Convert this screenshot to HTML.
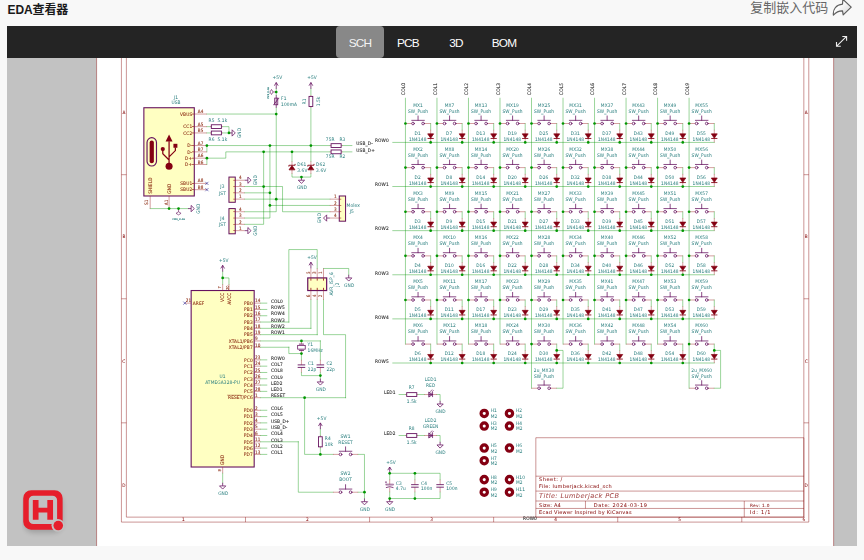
<!DOCTYPE html>
<html lang="zh-CN"><head><meta charset="utf-8"><title>EDA查看器</title>
<style>
html,body{margin:0;padding:0}
body{width:864px;height:560px;overflow:hidden;background:#f8f8f8;position:relative;font-family:"Liberation Sans","Noto Sans CJK SC",sans-serif}
.hd{position:absolute;left:7.5px;top:2.1px;font-size:12px;font-weight:bold;color:#1a1a1a;line-height:17px;letter-spacing:-.1px}
.cp{position:absolute;right:35.8px;top:-1px;font-size:13px;color:#666;line-height:18px;white-space:nowrap}
.share{position:absolute;left:832px;top:-1px}
.view{position:absolute;left:7px;top:26px;width:850px;height:520px;background:#c2c2c2;overflow:hidden}
.bar{position:absolute;left:0;top:0;width:850px;height:32px;background:#242424}
.tab{position:absolute;top:0;height:32px;width:48px;color:#fff;font-size:11.8px;line-height:35px;text-align:center;letter-spacing:-.75px}
.tab.on{background:#888;border-radius:4px;color:#f4f4f4}
.fs{position:absolute;left:828px;top:9px}
.logo{position:absolute;left:15px;top:463px}
</style></head><body>
<div class="hd">EDA查看器</div>
<div class="cp">复制嵌入代码</div>
<svg class="share" width="22" height="18" viewBox="0 0 22 18"><defs><linearGradient id="sg" x1="0" y1="0" x2="1" y2="1"><stop offset=".35" stop-color="#fff"/><stop offset="1" stop-color="#d4d4d4"/></linearGradient></defs><path d="M10.900 0.300L19.200 8.200L11.200 15.800L10.500 11.900C7.400 11.800 4.400 12.900 1.400 16.100C0.700 10.600 4 5.700 10.500 5.100Z" fill="url(#sg)" stroke="#5c5c5c" stroke-width="1.15" stroke-linejoin="round"/></svg>
<div class="view">
<svg width="850" height="520" viewBox="7 26 850 520" font-family="'DejaVu Sans Condensed','DejaVu Sans',sans-serif" text-rendering="geometricPrecision" style="position:absolute;left:0;top:0">
<defs><g id="sw" fill="none">
<path d="M-5.08 0H-2.54M5.08 0H2.54" stroke="#a02828" stroke-width="0.18"/>
<g stroke="#66125f" stroke-width="0.31" stroke-linecap="round"><circle cx="-2.032" cy="0" r=".54"/><circle cx="2.032" cy="0" r=".54"/>
<path d="M-2.54 1.27H2.54M0 1.27V3.048"/></g></g><g id="d">
<path d="M-2.54 0H-.762M2.54 0H.762" stroke="#a02828" stroke-width="0.18" fill="none"/>
<path d="M-.9 -1.2V1.2L.85 0Z" fill="#840012" stroke="#840012" stroke-width="0.28" stroke-linejoin="miter"/>
<path d="M.95 -1.25V1.25" stroke="#840012" stroke-width="0.35" fill="none"/></g><g id="dz">
<path d="M-2.54 0H-.762M2.54 0H.762" stroke="#a02828" stroke-width="0.18" fill="none"/>
<path d="M-.9 -1.2V1.2L.85 0Z" fill="#840012" stroke="#840012" stroke-width="0.28"/>
<path d="M.4 1.25L.95 1.25V-1.25L1.5 -1.25" stroke="#840012" stroke-width="0.35" fill="none"/></g><g id="led" fill="none">
<path d="M-2.54 0H-.762M2.54 0H.762" stroke="#a02828" stroke-width="0.18"/>
<g stroke="#66125f" stroke-width="0.31"><path d="M-.762 -1.016V1.016L.762 0ZM.762 -1.016V1.016M-.762 0H.762" fill="#66125f" fill-opacity=".45"/>
<path d="M-.2 1.1L.6 2M.4 .9L1.2 1.8" stroke-width="0.25"/></g></g><g id="r" fill="none">
<path d="M0 -2.54V-2.032M0 2.54V2.032" stroke="#a02828" stroke-width="0.18"/>
<rect x="-.762" y="-2.032" width="1.524" height="4.064" stroke="#66125f" stroke-width="0.36"/></g><g id="c" fill="none">
<path d="M0 -2.54V-.508M0 2.54V.508" stroke="#a02828" stroke-width="0.18"/>
<path d="M-1.524 .508H1.524M-1.524 -.508H1.524" stroke="#66125f" stroke-width="0.36"/></g><g id="cp" fill="none">
<path d="M0 -2.54V-.6M0 2.54V.6" stroke="#a02828" stroke-width="0.18"/>
<rect x="-1.524" y=".35" width="3.048" height=".4" stroke="#66125f" stroke-width="0.2"/>
<path d="M-1.524 -.7Q0 .1 1.524 -.7" stroke="#66125f" stroke-width="0.32"/>
<path d="M-1.9 1.5H-1.1M-1.5 1.9V1.1" stroke="#66125f" stroke-width="0.2"/></g><g id="pf" fill="none">
<path d="M0 -2.54V2.54" stroke="#66125f" stroke-width="0.31"/>
<rect x="-.62" y="-1.35" width="1.24" height="2.7" stroke="#66125f" stroke-width="0.31"/>
<path d="M-1.2 -1.35H-1L1 1.35H1.2" stroke="#66125f" stroke-width="0.31"/></g><g id="xt" fill="none">
<path d="M0 -2.54V-1.27M0 2.54V1.27" stroke="#a02828" stroke-width="0.18"/>
<rect x="-1.524" y="-.762" width="3.048" height="1.524" stroke="#66125f" stroke-width="0.31"/>
<path d="M-1.016 1.27H1.016M-1.016 -1.27H1.016" stroke="#66125f" stroke-width="0.34"/></g><g id="gnd" fill="none" stroke="#66125f" stroke-width="0.31">
<path d="M0 0V-1.27H1.27L0 -2.54L-1.27 -1.27H0"/></g><g id="p5" fill="none" stroke="#66125f" stroke-width="0.31">
<path d="M0 0V2.54M-.762 1.27L0 2.54L.762 1.27"/></g><g id="pwf" fill="none" stroke="#66125f" stroke-width="0.25">
<path d="M0 0V1.27L-1.016 1.905L0 2.54L1.016 1.905L0 1.27"/></g><g id="mh"><circle cx="0" cy="0" r="1.27" fill="none" stroke="#840012" stroke-width="1.3"/></g><g id="nc"><path d="M-.635 -.635L.635 .635M-.635 .635L.635 -.635" stroke="#000084" stroke-width="0.2" fill="none"/></g><g id="j4"><rect x="-1.27" y="-6.35" width="2.54" height="10.16" fill="#ffffc2" stroke="#66125f" stroke-width="0.41"/><path d="M-5.08 2.54H-1.27" stroke="#a02828" stroke-width="0.18" fill="none"/><rect x="-1.27" y="2.41" width=".8" height=".254" fill="#a02828"/><path d="M-5.08 0H-1.27" stroke="#a02828" stroke-width="0.18" fill="none"/><rect x="-1.27" y="-0.13" width=".8" height=".254" fill="#a02828"/><path d="M-5.08 -2.54H-1.27" stroke="#a02828" stroke-width="0.18" fill="none"/><rect x="-1.27" y="-2.67" width=".8" height=".254" fill="#a02828"/><path d="M-5.08 -5.08H-1.27" stroke="#a02828" stroke-width="0.18" fill="none"/><rect x="-1.27" y="-5.21" width=".8" height=".254" fill="#a02828"/></g></defs>
<rect x="96.6" y="25.8" width="737.01" height="521.12" fill="#fff"/>
<path d="M96.6 25.8H833.61V546.91H96.6ZM121.41 50.62H808.79V522.1H121.41ZM126.38 55.58H803.83V517.14H126.38ZM245.49 50.62L245.49 55.58M245.49 517.14L245.49 522.1M369.57 50.62L369.57 55.58M369.57 517.14L369.57 522.1M493.64 50.62L493.64 55.58M493.64 517.14L493.64 522.1M617.72 50.62L617.72 55.58M617.72 517.14L617.72 522.1M741.79 50.62L741.79 55.58M741.79 517.14L741.79 522.1M121.41 174.69L126.38 174.69M803.83 174.69L808.79 174.69M121.41 298.77L126.38 298.77M803.83 298.77L808.79 298.77M121.41 422.84L126.38 422.84M803.83 422.84L808.79 422.84M535.83 437.73H803.83V517.14H535.83ZM535.83 508.45L803.83 508.45M535.83 501.01L803.83 501.01M535.83 491.08L803.83 491.08M535.83 476.19L803.83 476.19M585.46 501.01L585.46 508.45M744.27 501.01L744.27 517.14" fill="none" stroke="#840000" stroke-width="0.42"/>
<g fill="none" stroke-linecap="butt">
<path d="M405.45 98.28 L405.45 344.1M430.66 123.5 L430.66 129.8M430.66 167.62 L430.66 173.92M430.66 211.74 L430.66 218.04M430.66 255.86 L430.66 262.16M430.66 299.98 L430.66 306.28M430.66 344.1 L430.66 350.41M436.96 98.28 L436.96 344.1M462.17 123.5 L462.17 129.8M462.17 167.62 L462.17 173.92M462.17 211.74 L462.17 218.04M462.17 255.86 L462.17 262.16M462.17 299.98 L462.17 306.28M462.17 344.1 L462.17 350.41M468.48 98.28 L468.48 344.1M493.69 123.5 L493.69 129.8M493.69 167.62 L493.69 173.92M493.69 211.74 L493.69 218.04M493.69 255.86 L493.69 262.16M493.69 299.98 L493.69 306.28M493.69 344.1 L493.69 350.41M499.99 98.28 L499.99 344.1M525.2 123.5 L525.2 129.8M525.2 167.62 L525.2 173.92M525.2 211.74 L525.2 218.04M525.2 255.86 L525.2 262.16M525.2 299.98 L525.2 306.28M525.2 344.1 L525.2 350.41M531.51 98.28 L531.51 388.22M556.72 123.5 L556.72 129.8M556.72 167.62 L556.72 173.92M556.72 211.74 L556.72 218.04M556.72 255.86 L556.72 262.16M556.72 299.98 L556.72 306.28M556.72 344.1 L556.72 350.41M563.02 98.28 L563.02 344.1M588.23 123.5 L588.23 129.8M588.23 167.62 L588.23 173.92M588.23 211.74 L588.23 218.04M588.23 255.86 L588.23 262.16M588.23 299.98 L588.23 306.28M588.23 344.1 L588.23 350.41M594.54 98.28 L594.54 344.1M619.75 123.5 L619.75 129.8M619.75 167.62 L619.75 173.92M619.75 211.74 L619.75 218.04M619.75 255.86 L619.75 262.16M619.75 299.98 L619.75 306.28M619.75 344.1 L619.75 350.41M626.05 98.28 L626.05 344.1M651.26 123.5 L651.26 129.8M651.26 167.62 L651.26 173.92M651.26 211.74 L651.26 218.04M651.26 255.86 L651.26 262.16M651.26 299.98 L651.26 306.28M651.26 344.1 L651.26 350.41M657.57 98.28 L657.57 344.1M682.78 123.5 L682.78 129.8M682.78 167.62 L682.78 173.92M682.78 211.74 L682.78 218.04M682.78 255.86 L682.78 262.16M682.78 299.98 L682.78 306.28M682.78 344.1 L682.78 350.41M689.08 98.28 L689.08 388.22M714.29 123.5 L714.29 129.8M714.29 167.62 L714.29 173.92M714.29 211.74 L714.29 218.04M714.29 255.86 L714.29 262.16M714.29 299.98 L714.29 306.28M714.29 344.1 L714.29 350.41M392.84 142.41 L714.29 142.41M392.84 186.53 L714.29 186.53M392.84 230.65 L714.29 230.65M392.84 274.77 L714.29 274.77M392.84 318.89 L714.29 318.89M392.84 363.01 L714.29 363.01M556.72 350.41 L563.02 350.41 L563.02 388.22 L556.72 388.22M714.29 350.41 L720.6 350.41 L720.6 388.22 L714.29 388.22M150.18 208.59 L187.99 208.59M206.9 114.04 L276.24 114.04M276.24 88.83 L276.24 95.13M276.24 107.74 L276.24 211.74 L244.72 211.74M206.9 126.65 L210.05 126.65M206.9 132.95 L210.05 132.95M222.66 126.65 L228.96 126.65 L228.96 132.95 L222.66 132.95M206.9 145.56 L206.9 151.86M206.9 158.16 L206.9 164.47M206.9 145.56 L329.81 145.56M206.9 158.16 L225.81 158.16 L225.81 151.86 L329.81 151.86M342.42 145.56 L351.87 145.56M342.42 151.86 L351.87 151.86M310.9 88.83 L310.9 95.13M310.9 107.74 L310.9 161.31M291.99 151.86 L291.99 161.31M291.99 173.92 L291.99 177.07 L310.9 177.07 L310.9 173.92M244.72 186.53 L282.54 186.53 L282.54 211.74 L329.81 211.74M244.72 192.83 L269.93 192.83M244.72 199.13 L329.81 199.13M269.93 205.44 L329.81 205.44M269.93 145.56 L269.93 218.04 L244.72 218.04M263.63 151.86 L263.63 224.34 L244.72 224.34M260.48 303.13 L266.78 303.13M260.48 309.44 L266.78 309.44M260.48 315.74 L266.78 315.74M260.48 322.04 L288.84 322.04M260.48 328.34 L310.9 328.34M260.48 334.65 L317.21 334.65M260.48 340.95 L320.36 340.95M260.48 347.25 L288.84 347.25M260.48 359.86 L266.78 359.86M260.48 366.16 L266.78 366.16M260.48 372.47 L266.78 372.47M260.48 378.77 L266.78 378.77M260.48 385.07 L266.78 385.07M260.48 391.37 L266.78 391.37M260.48 397.68 L345.57 397.68M260.48 410.28 L266.78 410.28M260.48 416.59 L266.78 416.59M260.48 422.89 L266.78 422.89M260.48 429.19 L266.78 429.19M260.48 435.5 L266.78 435.5M260.48 441.8 L298.3 441.8M260.48 448.1 L266.78 448.1M260.48 454.4 L266.78 454.4M222.66 284.22 L222.66 271.62M228.96 284.22 L228.96 277.92 L222.66 277.92M222.66 473.31 L222.66 482.77M288.84 322.04 L288.84 249.56 L317.21 249.56 L317.21 268.47M310.9 328.34 L310.9 299.98M317.21 334.65 L317.21 299.98M323.51 299.98 L323.51 334.65 L345.57 334.65 L345.57 397.68M323.51 268.47 L348.72 268.47 L348.72 274.77M288.84 347.25 L288.84 353.56 L301.45 353.56 L301.45 359.86M320.36 340.95 L320.36 359.86M301.45 372.47 L301.45 375.62 L320.36 375.62M320.36 372.47 L320.36 378.77M304.6 397.68 L304.6 454.4 L332.96 454.4M320.36 448.1 L320.36 454.4M320.36 429.19 L320.36 435.5M358.17 454.4 L364.48 454.4 L364.48 498.53M298.3 441.8 L298.3 492.22 L332.96 492.22M358.17 492.22 L364.48 492.22M399.14 394.53 L405.45 394.53M418.05 394.53 L424.36 394.53M436.96 394.53 L440.11 394.53 L440.11 400.83M399.14 435.5 L405.45 435.5M418.05 435.5 L424.36 435.5M436.96 435.5 L440.11 435.5 L440.11 441.8M389.69 473.31 L440.11 473.31 L440.11 479.62M389.69 498.53 L440.11 498.53 L440.11 492.22M389.69 473.31 L389.69 479.62M389.69 492.22 L389.69 498.53M414.9 473.31 L414.9 479.62M414.9 492.22 L414.9 498.53" stroke="#009600" stroke-width="0.4" stroke-linecap="square"/>
<use href="#sw" transform="translate(418.05 123.5) scale(2.48 -2.48)"/>
<use href="#d" transform="translate(430.66 136.1) rotate(90) scale(2.48 2.48)"/>
<use href="#sw" transform="translate(418.05 167.62) scale(2.48 -2.48)"/>
<use href="#d" transform="translate(430.66 180.22) rotate(90) scale(2.48 2.48)"/>
<use href="#sw" transform="translate(418.05 211.74) scale(2.48 -2.48)"/>
<use href="#d" transform="translate(430.66 224.34) rotate(90) scale(2.48 2.48)"/>
<use href="#sw" transform="translate(418.05 255.86) scale(2.48 -2.48)"/>
<use href="#d" transform="translate(430.66 268.47) rotate(90) scale(2.48 2.48)"/>
<use href="#sw" transform="translate(418.05 299.98) scale(2.48 -2.48)"/>
<use href="#d" transform="translate(430.66 312.59) rotate(90) scale(2.48 2.48)"/>
<use href="#sw" transform="translate(418.05 344.1) scale(2.48 -2.48)"/>
<use href="#d" transform="translate(430.66 356.71) rotate(90) scale(2.48 2.48)"/>
<use href="#sw" transform="translate(449.57 123.5) scale(2.48 -2.48)"/>
<use href="#d" transform="translate(462.17 136.1) rotate(90) scale(2.48 2.48)"/>
<use href="#sw" transform="translate(449.57 167.62) scale(2.48 -2.48)"/>
<use href="#d" transform="translate(462.17 180.22) rotate(90) scale(2.48 2.48)"/>
<use href="#sw" transform="translate(449.57 211.74) scale(2.48 -2.48)"/>
<use href="#d" transform="translate(462.17 224.34) rotate(90) scale(2.48 2.48)"/>
<use href="#sw" transform="translate(449.57 255.86) scale(2.48 -2.48)"/>
<use href="#d" transform="translate(462.17 268.47) rotate(90) scale(2.48 2.48)"/>
<use href="#sw" transform="translate(449.57 299.98) scale(2.48 -2.48)"/>
<use href="#d" transform="translate(462.17 312.59) rotate(90) scale(2.48 2.48)"/>
<use href="#sw" transform="translate(449.57 344.1) scale(2.48 -2.48)"/>
<use href="#d" transform="translate(462.17 356.71) rotate(90) scale(2.48 2.48)"/>
<use href="#sw" transform="translate(481.08 123.5) scale(2.48 -2.48)"/>
<use href="#d" transform="translate(493.69 136.1) rotate(90) scale(2.48 2.48)"/>
<use href="#sw" transform="translate(481.08 167.62) scale(2.48 -2.48)"/>
<use href="#d" transform="translate(493.69 180.22) rotate(90) scale(2.48 2.48)"/>
<use href="#sw" transform="translate(481.08 211.74) scale(2.48 -2.48)"/>
<use href="#d" transform="translate(493.69 224.34) rotate(90) scale(2.48 2.48)"/>
<use href="#sw" transform="translate(481.08 255.86) scale(2.48 -2.48)"/>
<use href="#d" transform="translate(493.69 268.47) rotate(90) scale(2.48 2.48)"/>
<use href="#sw" transform="translate(481.08 299.98) scale(2.48 -2.48)"/>
<use href="#d" transform="translate(493.69 312.59) rotate(90) scale(2.48 2.48)"/>
<use href="#sw" transform="translate(481.08 344.1) scale(2.48 -2.48)"/>
<use href="#d" transform="translate(493.69 356.71) rotate(90) scale(2.48 2.48)"/>
<use href="#sw" transform="translate(512.6 123.5) scale(2.48 -2.48)"/>
<use href="#d" transform="translate(525.2 136.1) rotate(90) scale(2.48 2.48)"/>
<use href="#sw" transform="translate(512.6 167.62) scale(2.48 -2.48)"/>
<use href="#d" transform="translate(525.2 180.22) rotate(90) scale(2.48 2.48)"/>
<use href="#sw" transform="translate(512.6 211.74) scale(2.48 -2.48)"/>
<use href="#d" transform="translate(525.2 224.34) rotate(90) scale(2.48 2.48)"/>
<use href="#sw" transform="translate(512.6 255.86) scale(2.48 -2.48)"/>
<use href="#d" transform="translate(525.2 268.47) rotate(90) scale(2.48 2.48)"/>
<use href="#sw" transform="translate(512.6 299.98) scale(2.48 -2.48)"/>
<use href="#d" transform="translate(525.2 312.59) rotate(90) scale(2.48 2.48)"/>
<use href="#sw" transform="translate(512.6 344.1) scale(2.48 -2.48)"/>
<use href="#d" transform="translate(525.2 356.71) rotate(90) scale(2.48 2.48)"/>
<use href="#sw" transform="translate(544.11 123.5) scale(2.48 -2.48)"/>
<use href="#d" transform="translate(556.72 136.1) rotate(90) scale(2.48 2.48)"/>
<use href="#sw" transform="translate(544.11 167.62) scale(2.48 -2.48)"/>
<use href="#d" transform="translate(556.72 180.22) rotate(90) scale(2.48 2.48)"/>
<use href="#sw" transform="translate(544.11 211.74) scale(2.48 -2.48)"/>
<use href="#d" transform="translate(556.72 224.34) rotate(90) scale(2.48 2.48)"/>
<use href="#sw" transform="translate(544.11 255.86) scale(2.48 -2.48)"/>
<use href="#d" transform="translate(556.72 268.47) rotate(90) scale(2.48 2.48)"/>
<use href="#sw" transform="translate(544.11 299.98) scale(2.48 -2.48)"/>
<use href="#d" transform="translate(556.72 312.59) rotate(90) scale(2.48 2.48)"/>
<use href="#sw" transform="translate(544.11 344.1) scale(2.48 -2.48)"/>
<use href="#d" transform="translate(556.72 356.71) rotate(90) scale(2.48 2.48)"/>
<use href="#sw" transform="translate(575.63 123.5) scale(2.48 -2.48)"/>
<use href="#d" transform="translate(588.23 136.1) rotate(90) scale(2.48 2.48)"/>
<use href="#sw" transform="translate(575.63 167.62) scale(2.48 -2.48)"/>
<use href="#d" transform="translate(588.23 180.22) rotate(90) scale(2.48 2.48)"/>
<use href="#sw" transform="translate(575.63 211.74) scale(2.48 -2.48)"/>
<use href="#d" transform="translate(588.23 224.34) rotate(90) scale(2.48 2.48)"/>
<use href="#sw" transform="translate(575.63 255.86) scale(2.48 -2.48)"/>
<use href="#d" transform="translate(588.23 268.47) rotate(90) scale(2.48 2.48)"/>
<use href="#sw" transform="translate(575.63 299.98) scale(2.48 -2.48)"/>
<use href="#d" transform="translate(588.23 312.59) rotate(90) scale(2.48 2.48)"/>
<use href="#sw" transform="translate(575.63 344.1) scale(2.48 -2.48)"/>
<use href="#d" transform="translate(588.23 356.71) rotate(90) scale(2.48 2.48)"/>
<use href="#sw" transform="translate(607.14 123.5) scale(2.48 -2.48)"/>
<use href="#d" transform="translate(619.75 136.1) rotate(90) scale(2.48 2.48)"/>
<use href="#sw" transform="translate(607.14 167.62) scale(2.48 -2.48)"/>
<use href="#d" transform="translate(619.75 180.22) rotate(90) scale(2.48 2.48)"/>
<use href="#sw" transform="translate(607.14 211.74) scale(2.48 -2.48)"/>
<use href="#d" transform="translate(619.75 224.34) rotate(90) scale(2.48 2.48)"/>
<use href="#sw" transform="translate(607.14 255.86) scale(2.48 -2.48)"/>
<use href="#d" transform="translate(619.75 268.47) rotate(90) scale(2.48 2.48)"/>
<use href="#sw" transform="translate(607.14 299.98) scale(2.48 -2.48)"/>
<use href="#d" transform="translate(619.75 312.59) rotate(90) scale(2.48 2.48)"/>
<use href="#sw" transform="translate(607.14 344.1) scale(2.48 -2.48)"/>
<use href="#d" transform="translate(619.75 356.71) rotate(90) scale(2.48 2.48)"/>
<use href="#sw" transform="translate(638.66 123.5) scale(2.48 -2.48)"/>
<use href="#d" transform="translate(651.26 136.1) rotate(90) scale(2.48 2.48)"/>
<use href="#sw" transform="translate(638.66 167.62) scale(2.48 -2.48)"/>
<use href="#d" transform="translate(651.26 180.22) rotate(90) scale(2.48 2.48)"/>
<use href="#sw" transform="translate(638.66 211.74) scale(2.48 -2.48)"/>
<use href="#d" transform="translate(651.26 224.34) rotate(90) scale(2.48 2.48)"/>
<use href="#sw" transform="translate(638.66 255.86) scale(2.48 -2.48)"/>
<use href="#d" transform="translate(651.26 268.47) rotate(90) scale(2.48 2.48)"/>
<use href="#sw" transform="translate(638.66 299.98) scale(2.48 -2.48)"/>
<use href="#d" transform="translate(651.26 312.59) rotate(90) scale(2.48 2.48)"/>
<use href="#sw" transform="translate(638.66 344.1) scale(2.48 -2.48)"/>
<use href="#d" transform="translate(651.26 356.71) rotate(90) scale(2.48 2.48)"/>
<use href="#sw" transform="translate(670.17 123.5) scale(2.48 -2.48)"/>
<use href="#d" transform="translate(682.78 136.1) rotate(90) scale(2.48 2.48)"/>
<use href="#sw" transform="translate(670.17 167.62) scale(2.48 -2.48)"/>
<use href="#d" transform="translate(682.78 180.22) rotate(90) scale(2.48 2.48)"/>
<use href="#sw" transform="translate(670.17 211.74) scale(2.48 -2.48)"/>
<use href="#d" transform="translate(682.78 224.34) rotate(90) scale(2.48 2.48)"/>
<use href="#sw" transform="translate(670.17 255.86) scale(2.48 -2.48)"/>
<use href="#d" transform="translate(682.78 268.47) rotate(90) scale(2.48 2.48)"/>
<use href="#sw" transform="translate(670.17 299.98) scale(2.48 -2.48)"/>
<use href="#d" transform="translate(682.78 312.59) rotate(90) scale(2.48 2.48)"/>
<use href="#sw" transform="translate(670.17 344.1) scale(2.48 -2.48)"/>
<use href="#d" transform="translate(682.78 356.71) rotate(90) scale(2.48 2.48)"/>
<use href="#sw" transform="translate(701.69 123.5) scale(2.48 -2.48)"/>
<use href="#d" transform="translate(714.29 136.1) rotate(90) scale(2.48 2.48)"/>
<use href="#sw" transform="translate(701.69 167.62) scale(2.48 -2.48)"/>
<use href="#d" transform="translate(714.29 180.22) rotate(90) scale(2.48 2.48)"/>
<use href="#sw" transform="translate(701.69 211.74) scale(2.48 -2.48)"/>
<use href="#d" transform="translate(714.29 224.34) rotate(90) scale(2.48 2.48)"/>
<use href="#sw" transform="translate(701.69 255.86) scale(2.48 -2.48)"/>
<use href="#d" transform="translate(714.29 268.47) rotate(90) scale(2.48 2.48)"/>
<use href="#sw" transform="translate(701.69 299.98) scale(2.48 -2.48)"/>
<use href="#d" transform="translate(714.29 312.59) rotate(90) scale(2.48 2.48)"/>
<use href="#sw" transform="translate(701.69 344.1) scale(2.48 -2.48)"/>
<use href="#d" transform="translate(714.29 356.71) rotate(90) scale(2.48 2.48)"/>
<use href="#sw" transform="translate(544.11 388.22) scale(2.48 -2.48)"/>
<use href="#sw" transform="translate(701.69 388.22) scale(2.48 -2.48)"/>
<rect x="143.87" y="107.74" width="50.42" height="88.24" fill="#ffffc2" stroke="#66125f" stroke-width="1.1"/>
<path d="M194.3 114.04L206.9 114.04" stroke="#a02828" stroke-width="0.45"/>
<rect x="192" y="113.69" width="2" height=".7" fill="#a02828"/>
<path d="M194.3 126.65L206.9 126.65" stroke="#a02828" stroke-width="0.45"/>
<rect x="192" y="126.3" width="2" height=".7" fill="#a02828"/>
<path d="M194.3 132.95L206.9 132.95" stroke="#a02828" stroke-width="0.45"/>
<rect x="192" y="132.6" width="2" height=".7" fill="#a02828"/>
<path d="M194.3 145.56L206.9 145.56" stroke="#a02828" stroke-width="0.45"/>
<rect x="192" y="145.21" width="2" height=".7" fill="#a02828"/>
<path d="M194.3 151.86L206.9 151.86" stroke="#a02828" stroke-width="0.45"/>
<rect x="192" y="151.51" width="2" height=".7" fill="#a02828"/>
<path d="M194.3 158.16L206.9 158.16" stroke="#a02828" stroke-width="0.45"/>
<rect x="192" y="157.81" width="2" height=".7" fill="#a02828"/>
<path d="M194.3 164.47L206.9 164.47" stroke="#a02828" stroke-width="0.45"/>
<rect x="192" y="164.12" width="2" height=".7" fill="#a02828"/>
<path d="M194.3 183.38L206.9 183.38" stroke="#a02828" stroke-width="0.45"/>
<rect x="192" y="183.03" width="2" height=".7" fill="#a02828"/>
<path d="M194.3 189.68L206.9 189.68" stroke="#a02828" stroke-width="0.45"/>
<rect x="192" y="189.33" width="2" height=".7" fill="#a02828"/>
<path d="M150.18 195.98L150.18 208.59" stroke="#a02828" stroke-width="0.45"/>
<path d="M169.08 195.98L169.08 208.59" stroke="#a02828" stroke-width="0.45"/>
<g transform="translate(169.08 151.86) scale(2.48 -2.48)"><path d="M-8.89 -3.81V3.81A1.905 1.905 0 0 0 -5.08 3.81V-3.81A1.905 1.905 0 0 0 -8.89 -3.81Z" fill="none" stroke="#66125f" stroke-width="0.47"/><rect x="-7.835" y="-4.6" width="1.7" height="9.2" rx=".85" fill="#840012"/><circle cx="-2.54" cy="1.143" r=".85" fill="#840012"/><circle cx="0" cy="-5.842" r="1.42" fill="#840012"/><path d="M0 -5.842V4.318M0 -3.302L-2.54 -.762V.508M0 -2.032L2.54 .508V1.778" fill="none" stroke="#840012" stroke-width="0.5"/><path d="M-1.4 4.2L0 6.95L1.4 4.2Z" fill="#840012"/><rect x="1.75" y="1.65" width="1.6" height="1.6" fill="#840012"/></g>
<use href="#nc" transform="translate(206.9 183.38) scale(2.48 -2.48)"/>
<use href="#nc" transform="translate(206.9 189.68) scale(2.48 -2.48)"/>
<use href="#gnd" transform="translate(187.99 208.59) rotate(-90) scale(2.48 -2.48)"/>
<use href="#pwf" transform="translate(178.54 208.59) rotate(180) scale(2.48 -2.48)"/>
<use href="#p5" transform="translate(276.24 88.83) scale(2.48 -2.48)"/>
<use href="#pwf" transform="translate(276.24 91.98) rotate(-90) scale(2.48 -2.48)"/>
<use href="#pf" transform="translate(276.24 101.44) scale(2.48 -2.48)"/>
<use href="#r" transform="translate(216.36 126.65) rotate(90) scale(2.48 -2.48)"/>
<use href="#r" transform="translate(216.36 132.95) rotate(90) scale(2.48 -2.48)"/>
<use href="#gnd" transform="translate(228.96 132.95) rotate(-90) scale(2.48 -2.48)"/>
<use href="#r" transform="translate(336.11 145.56) rotate(90) scale(2.48 -2.48)"/>
<use href="#r" transform="translate(336.11 151.86) rotate(90) scale(2.48 -2.48)"/>
<use href="#p5" transform="translate(310.9 88.83) scale(2.48 -2.48)"/>
<use href="#r" transform="translate(310.9 101.44) scale(2.48 -2.48)"/>
<use href="#dz" transform="translate(291.99 167.62) rotate(-90) scale(2.48 -2.48)"/>
<use href="#dz" transform="translate(310.9 167.62) rotate(-90) scale(2.48 -2.48)"/>
<use href="#gnd" transform="translate(301.45 177.07) scale(2.48 -2.48)"/>
<use href="#j4" transform="translate(232.11 192.83) rotate(180) scale(2.48 -2.48)"/>
<use href="#j4" transform="translate(232.11 224.34) rotate(180) scale(2.48 -2.48)"/>
<use href="#gnd" transform="translate(244.72 180.22) rotate(-90) scale(2.48 -2.48)"/>
<use href="#gnd" transform="translate(244.72 230.65) rotate(-90) scale(2.48 -2.48)"/>
<use href="#j4" transform="translate(342.42 211.74) scale(2.48 2.48)"/>
<use href="#gnd" transform="translate(329.81 218.04) rotate(90) scale(2.48 -2.48)"/>
<rect x="191.15" y="290.53" width="63.03" height="176.48" fill="#ffffc2" stroke="#66125f" stroke-width="1.1"/>
<path d="M254.18 303.13L260.48 303.13" stroke="#a02828" stroke-width="0.45"/>
<path d="M254.18 309.44L260.48 309.44" stroke="#a02828" stroke-width="0.45"/>
<path d="M254.18 315.74L260.48 315.74" stroke="#a02828" stroke-width="0.45"/>
<path d="M254.18 322.04L260.48 322.04" stroke="#a02828" stroke-width="0.45"/>
<path d="M254.18 328.34L260.48 328.34" stroke="#a02828" stroke-width="0.45"/>
<path d="M254.18 334.65L260.48 334.65" stroke="#a02828" stroke-width="0.45"/>
<path d="M254.18 340.95L260.48 340.95" stroke="#a02828" stroke-width="0.45"/>
<path d="M254.18 347.25L260.48 347.25" stroke="#a02828" stroke-width="0.45"/>
<path d="M254.18 359.86L260.48 359.86" stroke="#a02828" stroke-width="0.45"/>
<path d="M254.18 366.16L260.48 366.16" stroke="#a02828" stroke-width="0.45"/>
<path d="M254.18 372.47L260.48 372.47" stroke="#a02828" stroke-width="0.45"/>
<path d="M254.18 378.77L260.48 378.77" stroke="#a02828" stroke-width="0.45"/>
<path d="M254.18 385.07L260.48 385.07" stroke="#a02828" stroke-width="0.45"/>
<path d="M254.18 391.37L260.48 391.37" stroke="#a02828" stroke-width="0.45"/>
<path d="M254.18 397.68L260.48 397.68" stroke="#a02828" stroke-width="0.45"/>
<path d="M226.98 395.18H240.68" stroke="#8e3016" stroke-width=".4"/>
<path d="M254.18 410.28L260.48 410.28" stroke="#a02828" stroke-width="0.45"/>
<path d="M254.18 416.59L260.48 416.59" stroke="#a02828" stroke-width="0.45"/>
<path d="M254.18 422.89L260.48 422.89" stroke="#a02828" stroke-width="0.45"/>
<path d="M254.18 429.19L260.48 429.19" stroke="#a02828" stroke-width="0.45"/>
<path d="M254.18 435.5L260.48 435.5" stroke="#a02828" stroke-width="0.45"/>
<path d="M254.18 441.8L260.48 441.8" stroke="#a02828" stroke-width="0.45"/>
<path d="M254.18 448.1L260.48 448.1" stroke="#a02828" stroke-width="0.45"/>
<path d="M254.18 454.4L260.48 454.4" stroke="#a02828" stroke-width="0.45"/>
<path d="M184.84 303.13L191.15 303.13" stroke="#a02828" stroke-width="0.45"/>
<use href="#nc" transform="translate(184.84 303.13) scale(2.48 -2.48)"/>
<path d="M222.66 284.22L222.66 290.53" stroke="#a02828" stroke-width="0.45"/>
<path d="M228.96 284.22L228.96 290.53" stroke="#a02828" stroke-width="0.45"/>
<use href="#p5" transform="translate(222.66 271.62) scale(2.48 -2.48)"/>
<path d="M222.66 467.01L222.66 473.31" stroke="#a02828" stroke-width="0.45"/>
<use href="#gnd" transform="translate(222.66 482.77) scale(2.48 -2.48)"/>
<use href="#gnd" transform="translate(348.72 274.77) scale(2.48 -2.48)"/>
<use href="#p5" transform="translate(310.9 268.47) scale(2.48 -2.48)"/>
<rect x="307.75" y="277.92" width="18.91" height="12.61" fill="#ffffc2" stroke="#66125f" stroke-width="1.2"/>
<path d="M310.9 268.47L310.9 277.92" stroke="#a02828" stroke-width="0.45"/>
<path d="M310.9 290.53L310.9 299.98" stroke="#a02828" stroke-width="0.45"/>
<rect x="310.45" y="278.22" width=".9" height="2.4" fill="#a02828"/>
<rect x="310.45" y="287.83" width=".9" height="2.4" fill="#a02828"/>
<path d="M317.21 268.47L317.21 277.92" stroke="#a02828" stroke-width="0.45"/>
<path d="M317.21 290.53L317.21 299.98" stroke="#a02828" stroke-width="0.45"/>
<rect x="316.76" y="278.22" width=".9" height="2.4" fill="#a02828"/>
<rect x="316.76" y="287.83" width=".9" height="2.4" fill="#a02828"/>
<path d="M323.51 268.47L323.51 277.92" stroke="#a02828" stroke-width="0.45"/>
<path d="M323.51 290.53L323.51 299.98" stroke="#a02828" stroke-width="0.45"/>
<rect x="323.06" y="278.22" width=".9" height="2.4" fill="#a02828"/>
<rect x="323.06" y="287.83" width=".9" height="2.4" fill="#a02828"/>
<use href="#xt" transform="translate(301.45 347.25) scale(2.48 -2.48)"/>
<use href="#c" transform="translate(301.45 366.16) scale(2.48 -2.48)"/>
<use href="#c" transform="translate(320.36 366.16) scale(2.48 -2.48)"/>
<use href="#gnd" transform="translate(320.36 378.77) scale(2.48 -2.48)"/>
<use href="#r" transform="translate(320.36 441.8) scale(2.48 -2.48)"/>
<use href="#p5" transform="translate(320.36 429.19) scale(2.48 -2.48)"/>
<use href="#sw" transform="translate(345.57 454.4) scale(2.48 -2.48)"/>
<use href="#sw" transform="translate(345.57 492.22) scale(2.48 -2.48)"/>
<use href="#gnd" transform="translate(364.48 498.53) scale(2.48 -2.48)"/>
<use href="#r" transform="translate(411.75 394.53) rotate(90) scale(2.48 -2.48)"/>
<use href="#led" transform="translate(430.66 394.53) scale(2.48 -2.48)"/>
<use href="#gnd" transform="translate(440.11 400.83) scale(2.48 -2.48)"/>
<use href="#r" transform="translate(411.75 435.5) rotate(90) scale(2.48 -2.48)"/>
<use href="#led" transform="translate(430.66 435.5) scale(2.48 -2.48)"/>
<use href="#gnd" transform="translate(440.11 441.8) scale(2.48 -2.48)"/>
<use href="#cp" transform="translate(389.69 485.92) scale(2.48 -2.48)"/>
<use href="#c" transform="translate(414.9 485.92) scale(2.48 -2.48)"/>
<use href="#c" transform="translate(440.11 485.92) scale(2.48 -2.48)"/>
<use href="#p5" transform="translate(389.69 473.31) scale(2.48 -2.48)"/>
<use href="#gnd" transform="translate(389.69 498.53) scale(2.48 -2.48)"/>
<use href="#mh" transform="translate(484.24 413.44) scale(2.48 -2.48)"/>
<use href="#mh" transform="translate(509.45 413.44) scale(2.48 -2.48)"/>
<use href="#mh" transform="translate(484.24 426.04) scale(2.48 -2.48)"/>
<use href="#mh" transform="translate(509.45 426.04) scale(2.48 -2.48)"/>
<use href="#mh" transform="translate(484.24 448.1) scale(2.48 -2.48)"/>
<use href="#mh" transform="translate(509.45 448.1) scale(2.48 -2.48)"/>
<use href="#mh" transform="translate(484.24 460.71) scale(2.48 -2.48)"/>
<use href="#mh" transform="translate(484.24 479.62) scale(2.48 -2.48)"/>
<use href="#mh" transform="translate(509.45 479.62) scale(2.48 -2.48)"/>
<use href="#mh" transform="translate(484.24 492.22) scale(2.48 -2.48)"/>
<use href="#mh" transform="translate(509.45 492.22) scale(2.48 -2.48)"/>
</g>
<g fill="#009600"><circle cx="405.45" cy="123.5" r="1.35"/><circle cx="430.66" cy="142.41" r="1.35"/><circle cx="405.45" cy="167.62" r="1.35"/><circle cx="430.66" cy="186.53" r="1.35"/><circle cx="405.45" cy="211.74" r="1.35"/><circle cx="430.66" cy="230.65" r="1.35"/><circle cx="405.45" cy="255.86" r="1.35"/><circle cx="430.66" cy="274.77" r="1.35"/><circle cx="405.45" cy="299.98" r="1.35"/><circle cx="430.66" cy="318.89" r="1.35"/><circle cx="430.66" cy="363.01" r="1.35"/><circle cx="436.96" cy="123.5" r="1.35"/><circle cx="462.17" cy="142.41" r="1.35"/><circle cx="436.96" cy="167.62" r="1.35"/><circle cx="462.17" cy="186.53" r="1.35"/><circle cx="436.96" cy="211.74" r="1.35"/><circle cx="462.17" cy="230.65" r="1.35"/><circle cx="436.96" cy="255.86" r="1.35"/><circle cx="462.17" cy="274.77" r="1.35"/><circle cx="436.96" cy="299.98" r="1.35"/><circle cx="462.17" cy="318.89" r="1.35"/><circle cx="462.17" cy="363.01" r="1.35"/><circle cx="468.48" cy="123.5" r="1.35"/><circle cx="493.69" cy="142.41" r="1.35"/><circle cx="468.48" cy="167.62" r="1.35"/><circle cx="493.69" cy="186.53" r="1.35"/><circle cx="468.48" cy="211.74" r="1.35"/><circle cx="493.69" cy="230.65" r="1.35"/><circle cx="468.48" cy="255.86" r="1.35"/><circle cx="493.69" cy="274.77" r="1.35"/><circle cx="468.48" cy="299.98" r="1.35"/><circle cx="493.69" cy="318.89" r="1.35"/><circle cx="493.69" cy="363.01" r="1.35"/><circle cx="499.99" cy="123.5" r="1.35"/><circle cx="525.2" cy="142.41" r="1.35"/><circle cx="499.99" cy="167.62" r="1.35"/><circle cx="525.2" cy="186.53" r="1.35"/><circle cx="499.99" cy="211.74" r="1.35"/><circle cx="525.2" cy="230.65" r="1.35"/><circle cx="499.99" cy="255.86" r="1.35"/><circle cx="525.2" cy="274.77" r="1.35"/><circle cx="499.99" cy="299.98" r="1.35"/><circle cx="525.2" cy="318.89" r="1.35"/><circle cx="525.2" cy="363.01" r="1.35"/><circle cx="531.51" cy="123.5" r="1.35"/><circle cx="556.72" cy="142.41" r="1.35"/><circle cx="531.51" cy="167.62" r="1.35"/><circle cx="556.72" cy="186.53" r="1.35"/><circle cx="531.51" cy="211.74" r="1.35"/><circle cx="556.72" cy="230.65" r="1.35"/><circle cx="531.51" cy="255.86" r="1.35"/><circle cx="556.72" cy="274.77" r="1.35"/><circle cx="531.51" cy="299.98" r="1.35"/><circle cx="556.72" cy="318.89" r="1.35"/><circle cx="531.51" cy="344.1" r="1.35"/><circle cx="556.72" cy="363.01" r="1.35"/><circle cx="563.02" cy="123.5" r="1.35"/><circle cx="588.23" cy="142.41" r="1.35"/><circle cx="563.02" cy="167.62" r="1.35"/><circle cx="588.23" cy="186.53" r="1.35"/><circle cx="563.02" cy="211.74" r="1.35"/><circle cx="588.23" cy="230.65" r="1.35"/><circle cx="563.02" cy="255.86" r="1.35"/><circle cx="588.23" cy="274.77" r="1.35"/><circle cx="563.02" cy="299.98" r="1.35"/><circle cx="588.23" cy="318.89" r="1.35"/><circle cx="588.23" cy="363.01" r="1.35"/><circle cx="594.54" cy="123.5" r="1.35"/><circle cx="619.75" cy="142.41" r="1.35"/><circle cx="594.54" cy="167.62" r="1.35"/><circle cx="619.75" cy="186.53" r="1.35"/><circle cx="594.54" cy="211.74" r="1.35"/><circle cx="619.75" cy="230.65" r="1.35"/><circle cx="594.54" cy="255.86" r="1.35"/><circle cx="619.75" cy="274.77" r="1.35"/><circle cx="594.54" cy="299.98" r="1.35"/><circle cx="619.75" cy="318.89" r="1.35"/><circle cx="619.75" cy="363.01" r="1.35"/><circle cx="626.05" cy="123.5" r="1.35"/><circle cx="651.26" cy="142.41" r="1.35"/><circle cx="626.05" cy="167.62" r="1.35"/><circle cx="651.26" cy="186.53" r="1.35"/><circle cx="626.05" cy="211.74" r="1.35"/><circle cx="651.26" cy="230.65" r="1.35"/><circle cx="626.05" cy="255.86" r="1.35"/><circle cx="651.26" cy="274.77" r="1.35"/><circle cx="626.05" cy="299.98" r="1.35"/><circle cx="651.26" cy="318.89" r="1.35"/><circle cx="651.26" cy="363.01" r="1.35"/><circle cx="657.57" cy="123.5" r="1.35"/><circle cx="682.78" cy="142.41" r="1.35"/><circle cx="657.57" cy="167.62" r="1.35"/><circle cx="682.78" cy="186.53" r="1.35"/><circle cx="657.57" cy="211.74" r="1.35"/><circle cx="682.78" cy="230.65" r="1.35"/><circle cx="657.57" cy="255.86" r="1.35"/><circle cx="682.78" cy="274.77" r="1.35"/><circle cx="657.57" cy="299.98" r="1.35"/><circle cx="682.78" cy="318.89" r="1.35"/><circle cx="682.78" cy="363.01" r="1.35"/><circle cx="689.08" cy="123.5" r="1.35"/><circle cx="689.08" cy="167.62" r="1.35"/><circle cx="689.08" cy="211.74" r="1.35"/><circle cx="689.08" cy="255.86" r="1.35"/><circle cx="689.08" cy="299.98" r="1.35"/><circle cx="689.08" cy="344.1" r="1.35"/><circle cx="556.72" cy="350.41" r="1.35"/><circle cx="714.29" cy="350.41" r="1.35"/><circle cx="169.08" cy="208.59" r="1.35"/><circle cx="178.54" cy="208.59" r="1.35"/><circle cx="276.24" cy="114.04" r="1.35"/><circle cx="276.24" cy="91.98" r="1.35"/><circle cx="228.96" cy="132.95" r="1.35"/><circle cx="206.9" cy="145.56" r="1.35"/><circle cx="206.9" cy="158.16" r="1.35"/><circle cx="269.93" cy="145.56" r="1.35"/><circle cx="310.9" cy="145.56" r="1.35"/><circle cx="263.63" cy="151.86" r="1.35"/><circle cx="291.99" cy="151.86" r="1.35"/><circle cx="301.45" cy="177.07" r="1.35"/><circle cx="263.63" cy="186.53" r="1.35"/><circle cx="269.93" cy="192.83" r="1.35"/><circle cx="276.24" cy="199.13" r="1.35"/><circle cx="269.93" cy="205.44" r="1.35"/><circle cx="222.66" cy="277.92" r="1.35"/><circle cx="301.45" cy="340.95" r="1.35"/><circle cx="301.45" cy="353.56" r="1.35"/><circle cx="320.36" cy="375.62" r="1.35"/><circle cx="304.6" cy="397.68" r="1.35"/><circle cx="320.36" cy="454.4" r="1.35"/><circle cx="364.48" cy="492.22" r="1.35"/><circle cx="389.69" cy="473.31" r="1.35"/><circle cx="389.69" cy="498.53" r="1.35"/><circle cx="414.9" cy="473.31" r="1.35"/><circle cx="414.9" cy="498.53" r="1.35"/></g>
<g stroke-width=".04" letter-spacing=".12" opacity=".96"><text x="183.45" y="54.81" fill="#840000" stroke="#840000" font-size="4.7" text-anchor="middle">1</text>
<text x="183.45" y="521.33" fill="#840000" stroke="#840000" font-size="4.7" text-anchor="middle">1</text>
<text x="307.53" y="54.81" fill="#840000" stroke="#840000" font-size="4.7" text-anchor="middle">2</text>
<text x="307.53" y="521.33" fill="#840000" stroke="#840000" font-size="4.7" text-anchor="middle">2</text>
<text x="431.6" y="54.81" fill="#840000" stroke="#840000" font-size="4.7" text-anchor="middle">3</text>
<text x="431.6" y="521.33" fill="#840000" stroke="#840000" font-size="4.7" text-anchor="middle">3</text>
<text x="555.68" y="54.81" fill="#840000" stroke="#840000" font-size="4.7" text-anchor="middle">4</text>
<text x="555.68" y="521.33" fill="#840000" stroke="#840000" font-size="4.7" text-anchor="middle">4</text>
<text x="679.75" y="54.81" fill="#840000" stroke="#840000" font-size="4.7" text-anchor="middle">5</text>
<text x="679.75" y="521.33" fill="#840000" stroke="#840000" font-size="4.7" text-anchor="middle">5</text>
<text x="803.83" y="54.81" fill="#840000" stroke="#840000" font-size="4.7" text-anchor="middle">6</text>
<text x="803.83" y="521.33" fill="#840000" stroke="#840000" font-size="4.7" text-anchor="middle">6</text>
<text x="123.9" y="114.37" fill="#840000" stroke="#840000" font-size="4.7" text-anchor="middle">A</text>
<text x="806.31" y="114.37" fill="#840000" stroke="#840000" font-size="4.7" text-anchor="middle">A</text>
<text x="123.9" y="238.44" fill="#840000" stroke="#840000" font-size="4.7" text-anchor="middle">B</text>
<text x="806.31" y="238.44" fill="#840000" stroke="#840000" font-size="4.7" text-anchor="middle">B</text>
<text x="123.9" y="362.52" fill="#840000" stroke="#840000" font-size="4.7" text-anchor="middle">C</text>
<text x="806.31" y="362.52" fill="#840000" stroke="#840000" font-size="4.7" text-anchor="middle">C</text>
<text x="123.9" y="486.59" fill="#840000" stroke="#840000" font-size="4.7" text-anchor="middle">D</text>
<text x="806.31" y="486.59" fill="#840000" stroke="#840000" font-size="4.7" text-anchor="middle">D</text>
<text x="539.11" y="481.12" fill="#840000" stroke="#840000" font-size="5" font-family="'DejaVu Sans',sans-serif" textLength="23" lengthAdjust="spacing" letter-spacing="0">Sheet: /</text>
<text x="539.11" y="488.44" fill="#840000" stroke="#840000" font-size="5" font-family="'DejaVu Sans',sans-serif" textLength="72.6" lengthAdjust="spacing" letter-spacing="0">File: lumberjack.kicad_sch</text>
<text x="539.11" y="497.96" fill="#840000" stroke="#840000" font-size="6.6" font-family="'DejaVu Sans',sans-serif" font-style="italic" opacity=".8" textLength="80" lengthAdjust="spacing" letter-spacing="0">Title: Lumberjack PCB</text>
<text x="539.11" y="506.8" fill="#840000" stroke="#840000" font-size="5" font-family="'DejaVu Sans',sans-serif" textLength="21.7" lengthAdjust="spacing" letter-spacing="0">Size: A4</text>
<text x="593.7" y="506.8" fill="#840000" stroke="#840000" font-size="5" font-family="'DejaVu Sans',sans-serif" textLength="53.3" lengthAdjust="spacing" letter-spacing="0">Date: 2024-03-19</text>
<text x="750.03" y="506.55" fill="#840000" stroke="#840000" font-size="4.3" font-family="'DejaVu Sans',sans-serif" textLength="19.5" lengthAdjust="spacing" letter-spacing="0">Rev: 1.0</text>
<text x="539.11" y="513.75" fill="#840000" stroke="#840000" font-size="5" font-family="'DejaVu Sans',sans-serif" textLength="92.4" lengthAdjust="spacing" letter-spacing="0">Ecad Viewer Inspired by KiCanvas</text>
<text x="750.03" y="513.75" fill="#840000" stroke="#840000" font-size="5" font-family="'DejaVu Sans',sans-serif" textLength="20.5" lengthAdjust="spacing" letter-spacing="0">Id: 1/1</text>
<text x="403.35" y="96.64" fill="#2a2a2a" stroke="#2a2a2a" font-size="4.8" transform="rotate(-90 403.35 94.88)" stroke-width=".11">COL0</text>
<text x="418.05" y="106.5" fill="#2f8080" stroke="#2f8080" font-size="4.8" text-anchor="middle">MX1</text>
<text x="418.05" y="112.85" fill="#2f8080" stroke="#2f8080" font-size="4.8" text-anchor="middle">SW_Push</text>
<text x="417.75" y="134.55" fill="#2f8080" stroke="#2f8080" font-size="4.8" text-anchor="middle">D1</text>
<text x="417.75" y="140.75" fill="#2f8080" stroke="#2f8080" font-size="4.8" text-anchor="middle">1N4148</text>
<text x="418.05" y="150.62" fill="#2f8080" stroke="#2f8080" font-size="4.8" text-anchor="middle">MX2</text>
<text x="418.05" y="156.97" fill="#2f8080" stroke="#2f8080" font-size="4.8" text-anchor="middle">SW_Push</text>
<text x="417.75" y="178.67" fill="#2f8080" stroke="#2f8080" font-size="4.8" text-anchor="middle">D2</text>
<text x="417.75" y="184.87" fill="#2f8080" stroke="#2f8080" font-size="4.8" text-anchor="middle">1N4148</text>
<text x="418.05" y="194.74" fill="#2f8080" stroke="#2f8080" font-size="4.8" text-anchor="middle">MX3</text>
<text x="418.05" y="201.09" fill="#2f8080" stroke="#2f8080" font-size="4.8" text-anchor="middle">SW_Push</text>
<text x="417.75" y="222.79" fill="#2f8080" stroke="#2f8080" font-size="4.8" text-anchor="middle">D3</text>
<text x="417.75" y="228.99" fill="#2f8080" stroke="#2f8080" font-size="4.8" text-anchor="middle">1N4148</text>
<text x="418.05" y="238.86" fill="#2f8080" stroke="#2f8080" font-size="4.8" text-anchor="middle">MX4</text>
<text x="418.05" y="245.21" fill="#2f8080" stroke="#2f8080" font-size="4.8" text-anchor="middle">SW_Push</text>
<text x="417.75" y="266.91" fill="#2f8080" stroke="#2f8080" font-size="4.8" text-anchor="middle">D4</text>
<text x="417.75" y="273.11" fill="#2f8080" stroke="#2f8080" font-size="4.8" text-anchor="middle">1N4148</text>
<text x="418.05" y="282.98" fill="#2f8080" stroke="#2f8080" font-size="4.8" text-anchor="middle">MX5</text>
<text x="418.05" y="289.33" fill="#2f8080" stroke="#2f8080" font-size="4.8" text-anchor="middle">SW_Push</text>
<text x="417.75" y="311.03" fill="#2f8080" stroke="#2f8080" font-size="4.8" text-anchor="middle">D5</text>
<text x="417.75" y="317.23" fill="#2f8080" stroke="#2f8080" font-size="4.8" text-anchor="middle">1N4148</text>
<text x="418.05" y="327.1" fill="#2f8080" stroke="#2f8080" font-size="4.8" text-anchor="middle">MX6</text>
<text x="418.05" y="333.45" fill="#2f8080" stroke="#2f8080" font-size="4.8" text-anchor="middle">SW_Push</text>
<text x="417.75" y="355.15" fill="#2f8080" stroke="#2f8080" font-size="4.8" text-anchor="middle">D6</text>
<text x="417.75" y="361.35" fill="#2f8080" stroke="#2f8080" font-size="4.8" text-anchor="middle">1N4148</text>
<text x="434.86" y="96.64" fill="#2a2a2a" stroke="#2a2a2a" font-size="4.8" transform="rotate(-90 434.86 94.88)" stroke-width=".11">COL1</text>
<text x="449.57" y="106.5" fill="#2f8080" stroke="#2f8080" font-size="4.8" text-anchor="middle">MX7</text>
<text x="449.57" y="112.85" fill="#2f8080" stroke="#2f8080" font-size="4.8" text-anchor="middle">SW_Push</text>
<text x="449.27" y="134.55" fill="#2f8080" stroke="#2f8080" font-size="4.8" text-anchor="middle">D7</text>
<text x="449.27" y="140.75" fill="#2f8080" stroke="#2f8080" font-size="4.8" text-anchor="middle">1N4148</text>
<text x="449.57" y="150.62" fill="#2f8080" stroke="#2f8080" font-size="4.8" text-anchor="middle">MX8</text>
<text x="449.57" y="156.97" fill="#2f8080" stroke="#2f8080" font-size="4.8" text-anchor="middle">SW_Push</text>
<text x="449.27" y="178.67" fill="#2f8080" stroke="#2f8080" font-size="4.8" text-anchor="middle">D8</text>
<text x="449.27" y="184.87" fill="#2f8080" stroke="#2f8080" font-size="4.8" text-anchor="middle">1N4148</text>
<text x="449.57" y="194.74" fill="#2f8080" stroke="#2f8080" font-size="4.8" text-anchor="middle">MX9</text>
<text x="449.57" y="201.09" fill="#2f8080" stroke="#2f8080" font-size="4.8" text-anchor="middle">SW_Push</text>
<text x="449.27" y="222.79" fill="#2f8080" stroke="#2f8080" font-size="4.8" text-anchor="middle">D9</text>
<text x="449.27" y="228.99" fill="#2f8080" stroke="#2f8080" font-size="4.8" text-anchor="middle">1N4148</text>
<text x="449.57" y="238.86" fill="#2f8080" stroke="#2f8080" font-size="4.8" text-anchor="middle">MX10</text>
<text x="449.57" y="245.21" fill="#2f8080" stroke="#2f8080" font-size="4.8" text-anchor="middle">SW_Push</text>
<text x="449.27" y="266.91" fill="#2f8080" stroke="#2f8080" font-size="4.8" text-anchor="middle">D10</text>
<text x="449.27" y="273.11" fill="#2f8080" stroke="#2f8080" font-size="4.8" text-anchor="middle">1N4148</text>
<text x="449.57" y="282.98" fill="#2f8080" stroke="#2f8080" font-size="4.8" text-anchor="middle">MX11</text>
<text x="449.57" y="289.33" fill="#2f8080" stroke="#2f8080" font-size="4.8" text-anchor="middle">SW_Push</text>
<text x="449.27" y="311.03" fill="#2f8080" stroke="#2f8080" font-size="4.8" text-anchor="middle">D11</text>
<text x="449.27" y="317.23" fill="#2f8080" stroke="#2f8080" font-size="4.8" text-anchor="middle">1N4148</text>
<text x="449.57" y="327.1" fill="#2f8080" stroke="#2f8080" font-size="4.8" text-anchor="middle">MX12</text>
<text x="449.57" y="333.45" fill="#2f8080" stroke="#2f8080" font-size="4.8" text-anchor="middle">SW_Push</text>
<text x="449.27" y="355.15" fill="#2f8080" stroke="#2f8080" font-size="4.8" text-anchor="middle">D12</text>
<text x="449.27" y="361.35" fill="#2f8080" stroke="#2f8080" font-size="4.8" text-anchor="middle">1N4148</text>
<text x="466.38" y="96.64" fill="#2a2a2a" stroke="#2a2a2a" font-size="4.8" transform="rotate(-90 466.38 94.88)" stroke-width=".11">COL2</text>
<text x="481.08" y="106.5" fill="#2f8080" stroke="#2f8080" font-size="4.8" text-anchor="middle">MX13</text>
<text x="481.08" y="112.85" fill="#2f8080" stroke="#2f8080" font-size="4.8" text-anchor="middle">SW_Push</text>
<text x="480.78" y="134.55" fill="#2f8080" stroke="#2f8080" font-size="4.8" text-anchor="middle">D13</text>
<text x="480.78" y="140.75" fill="#2f8080" stroke="#2f8080" font-size="4.8" text-anchor="middle">1N4148</text>
<text x="481.08" y="150.62" fill="#2f8080" stroke="#2f8080" font-size="4.8" text-anchor="middle">MX14</text>
<text x="481.08" y="156.97" fill="#2f8080" stroke="#2f8080" font-size="4.8" text-anchor="middle">SW_Push</text>
<text x="480.78" y="178.67" fill="#2f8080" stroke="#2f8080" font-size="4.8" text-anchor="middle">D14</text>
<text x="480.78" y="184.87" fill="#2f8080" stroke="#2f8080" font-size="4.8" text-anchor="middle">1N4148</text>
<text x="481.08" y="194.74" fill="#2f8080" stroke="#2f8080" font-size="4.8" text-anchor="middle">MX15</text>
<text x="481.08" y="201.09" fill="#2f8080" stroke="#2f8080" font-size="4.8" text-anchor="middle">SW_Push</text>
<text x="480.78" y="222.79" fill="#2f8080" stroke="#2f8080" font-size="4.8" text-anchor="middle">D15</text>
<text x="480.78" y="228.99" fill="#2f8080" stroke="#2f8080" font-size="4.8" text-anchor="middle">1N4148</text>
<text x="481.08" y="238.86" fill="#2f8080" stroke="#2f8080" font-size="4.8" text-anchor="middle">MX16</text>
<text x="481.08" y="245.21" fill="#2f8080" stroke="#2f8080" font-size="4.8" text-anchor="middle">SW_Push</text>
<text x="480.78" y="266.91" fill="#2f8080" stroke="#2f8080" font-size="4.8" text-anchor="middle">D16</text>
<text x="480.78" y="273.11" fill="#2f8080" stroke="#2f8080" font-size="4.8" text-anchor="middle">1N4148</text>
<text x="481.08" y="282.98" fill="#2f8080" stroke="#2f8080" font-size="4.8" text-anchor="middle">MX17</text>
<text x="481.08" y="289.33" fill="#2f8080" stroke="#2f8080" font-size="4.8" text-anchor="middle">SW_Push</text>
<text x="480.78" y="311.03" fill="#2f8080" stroke="#2f8080" font-size="4.8" text-anchor="middle">D17</text>
<text x="480.78" y="317.23" fill="#2f8080" stroke="#2f8080" font-size="4.8" text-anchor="middle">1N4148</text>
<text x="481.08" y="327.1" fill="#2f8080" stroke="#2f8080" font-size="4.8" text-anchor="middle">MX18</text>
<text x="481.08" y="333.45" fill="#2f8080" stroke="#2f8080" font-size="4.8" text-anchor="middle">SW_Push</text>
<text x="480.78" y="355.15" fill="#2f8080" stroke="#2f8080" font-size="4.8" text-anchor="middle">D18</text>
<text x="480.78" y="361.35" fill="#2f8080" stroke="#2f8080" font-size="4.8" text-anchor="middle">1N4148</text>
<text x="497.89" y="96.64" fill="#2a2a2a" stroke="#2a2a2a" font-size="4.8" transform="rotate(-90 497.89 94.88)" stroke-width=".11">COL3</text>
<text x="512.6" y="106.5" fill="#2f8080" stroke="#2f8080" font-size="4.8" text-anchor="middle">MX19</text>
<text x="512.6" y="112.85" fill="#2f8080" stroke="#2f8080" font-size="4.8" text-anchor="middle">SW_Push</text>
<text x="512.3" y="134.55" fill="#2f8080" stroke="#2f8080" font-size="4.8" text-anchor="middle">D19</text>
<text x="512.3" y="140.75" fill="#2f8080" stroke="#2f8080" font-size="4.8" text-anchor="middle">1N4148</text>
<text x="512.6" y="150.62" fill="#2f8080" stroke="#2f8080" font-size="4.8" text-anchor="middle">MX20</text>
<text x="512.6" y="156.97" fill="#2f8080" stroke="#2f8080" font-size="4.8" text-anchor="middle">SW_Push</text>
<text x="512.3" y="178.67" fill="#2f8080" stroke="#2f8080" font-size="4.8" text-anchor="middle">D20</text>
<text x="512.3" y="184.87" fill="#2f8080" stroke="#2f8080" font-size="4.8" text-anchor="middle">1N4148</text>
<text x="512.6" y="194.74" fill="#2f8080" stroke="#2f8080" font-size="4.8" text-anchor="middle">MX21</text>
<text x="512.6" y="201.09" fill="#2f8080" stroke="#2f8080" font-size="4.8" text-anchor="middle">SW_Push</text>
<text x="512.3" y="222.79" fill="#2f8080" stroke="#2f8080" font-size="4.8" text-anchor="middle">D21</text>
<text x="512.3" y="228.99" fill="#2f8080" stroke="#2f8080" font-size="4.8" text-anchor="middle">1N4148</text>
<text x="512.6" y="238.86" fill="#2f8080" stroke="#2f8080" font-size="4.8" text-anchor="middle">MX22</text>
<text x="512.6" y="245.21" fill="#2f8080" stroke="#2f8080" font-size="4.8" text-anchor="middle">SW_Push</text>
<text x="512.3" y="266.91" fill="#2f8080" stroke="#2f8080" font-size="4.8" text-anchor="middle">D22</text>
<text x="512.3" y="273.11" fill="#2f8080" stroke="#2f8080" font-size="4.8" text-anchor="middle">1N4148</text>
<text x="512.6" y="282.98" fill="#2f8080" stroke="#2f8080" font-size="4.8" text-anchor="middle">MX23</text>
<text x="512.6" y="289.33" fill="#2f8080" stroke="#2f8080" font-size="4.8" text-anchor="middle">SW_Push</text>
<text x="512.3" y="311.03" fill="#2f8080" stroke="#2f8080" font-size="4.8" text-anchor="middle">D23</text>
<text x="512.3" y="317.23" fill="#2f8080" stroke="#2f8080" font-size="4.8" text-anchor="middle">1N4148</text>
<text x="512.6" y="327.1" fill="#2f8080" stroke="#2f8080" font-size="4.8" text-anchor="middle">MX24</text>
<text x="512.6" y="333.45" fill="#2f8080" stroke="#2f8080" font-size="4.8" text-anchor="middle">SW_Push</text>
<text x="512.3" y="355.15" fill="#2f8080" stroke="#2f8080" font-size="4.8" text-anchor="middle">D24</text>
<text x="512.3" y="361.35" fill="#2f8080" stroke="#2f8080" font-size="4.8" text-anchor="middle">1N4148</text>
<text x="529.41" y="96.64" fill="#2a2a2a" stroke="#2a2a2a" font-size="4.8" transform="rotate(-90 529.41 94.88)" stroke-width=".11">COL4</text>
<text x="544.11" y="106.5" fill="#2f8080" stroke="#2f8080" font-size="4.8" text-anchor="middle">MX25</text>
<text x="544.11" y="112.85" fill="#2f8080" stroke="#2f8080" font-size="4.8" text-anchor="middle">SW_Push</text>
<text x="543.81" y="134.55" fill="#2f8080" stroke="#2f8080" font-size="4.8" text-anchor="middle">D25</text>
<text x="543.81" y="140.75" fill="#2f8080" stroke="#2f8080" font-size="4.8" text-anchor="middle">1N4148</text>
<text x="544.11" y="150.62" fill="#2f8080" stroke="#2f8080" font-size="4.8" text-anchor="middle">MX26</text>
<text x="544.11" y="156.97" fill="#2f8080" stroke="#2f8080" font-size="4.8" text-anchor="middle">SW_Push</text>
<text x="543.81" y="178.67" fill="#2f8080" stroke="#2f8080" font-size="4.8" text-anchor="middle">D26</text>
<text x="543.81" y="184.87" fill="#2f8080" stroke="#2f8080" font-size="4.8" text-anchor="middle">1N4148</text>
<text x="544.11" y="194.74" fill="#2f8080" stroke="#2f8080" font-size="4.8" text-anchor="middle">MX27</text>
<text x="544.11" y="201.09" fill="#2f8080" stroke="#2f8080" font-size="4.8" text-anchor="middle">SW_Push</text>
<text x="543.81" y="222.79" fill="#2f8080" stroke="#2f8080" font-size="4.8" text-anchor="middle">D27</text>
<text x="543.81" y="228.99" fill="#2f8080" stroke="#2f8080" font-size="4.8" text-anchor="middle">1N4148</text>
<text x="544.11" y="238.86" fill="#2f8080" stroke="#2f8080" font-size="4.8" text-anchor="middle">MX28</text>
<text x="544.11" y="245.21" fill="#2f8080" stroke="#2f8080" font-size="4.8" text-anchor="middle">SW_Push</text>
<text x="543.81" y="266.91" fill="#2f8080" stroke="#2f8080" font-size="4.8" text-anchor="middle">D28</text>
<text x="543.81" y="273.11" fill="#2f8080" stroke="#2f8080" font-size="4.8" text-anchor="middle">1N4148</text>
<text x="544.11" y="282.98" fill="#2f8080" stroke="#2f8080" font-size="4.8" text-anchor="middle">MX29</text>
<text x="544.11" y="289.33" fill="#2f8080" stroke="#2f8080" font-size="4.8" text-anchor="middle">SW_Push</text>
<text x="543.81" y="311.03" fill="#2f8080" stroke="#2f8080" font-size="4.8" text-anchor="middle">D29</text>
<text x="543.81" y="317.23" fill="#2f8080" stroke="#2f8080" font-size="4.8" text-anchor="middle">1N4148</text>
<text x="544.11" y="327.1" fill="#2f8080" stroke="#2f8080" font-size="4.8" text-anchor="middle">MX30</text>
<text x="544.11" y="333.45" fill="#2f8080" stroke="#2f8080" font-size="4.8" text-anchor="middle">SW_Push</text>
<text x="543.81" y="355.15" fill="#2f8080" stroke="#2f8080" font-size="4.8" text-anchor="middle">D30</text>
<text x="543.81" y="361.35" fill="#2f8080" stroke="#2f8080" font-size="4.8" text-anchor="middle">1N4148</text>
<text x="560.92" y="96.64" fill="#2a2a2a" stroke="#2a2a2a" font-size="4.8" transform="rotate(-90 560.92 94.88)" stroke-width=".11">COL5</text>
<text x="575.63" y="106.5" fill="#2f8080" stroke="#2f8080" font-size="4.8" text-anchor="middle">MX31</text>
<text x="575.63" y="112.85" fill="#2f8080" stroke="#2f8080" font-size="4.8" text-anchor="middle">SW_Push</text>
<text x="575.33" y="134.55" fill="#2f8080" stroke="#2f8080" font-size="4.8" text-anchor="middle">D31</text>
<text x="575.33" y="140.75" fill="#2f8080" stroke="#2f8080" font-size="4.8" text-anchor="middle">1N4148</text>
<text x="575.63" y="150.62" fill="#2f8080" stroke="#2f8080" font-size="4.8" text-anchor="middle">MX32</text>
<text x="575.63" y="156.97" fill="#2f8080" stroke="#2f8080" font-size="4.8" text-anchor="middle">SW_Push</text>
<text x="575.33" y="178.67" fill="#2f8080" stroke="#2f8080" font-size="4.8" text-anchor="middle">D32</text>
<text x="575.33" y="184.87" fill="#2f8080" stroke="#2f8080" font-size="4.8" text-anchor="middle">1N4148</text>
<text x="575.63" y="194.74" fill="#2f8080" stroke="#2f8080" font-size="4.8" text-anchor="middle">MX33</text>
<text x="575.63" y="201.09" fill="#2f8080" stroke="#2f8080" font-size="4.8" text-anchor="middle">SW_Push</text>
<text x="575.33" y="222.79" fill="#2f8080" stroke="#2f8080" font-size="4.8" text-anchor="middle">D33</text>
<text x="575.33" y="228.99" fill="#2f8080" stroke="#2f8080" font-size="4.8" text-anchor="middle">1N4148</text>
<text x="575.63" y="238.86" fill="#2f8080" stroke="#2f8080" font-size="4.8" text-anchor="middle">MX34</text>
<text x="575.63" y="245.21" fill="#2f8080" stroke="#2f8080" font-size="4.8" text-anchor="middle">SW_Push</text>
<text x="575.33" y="266.91" fill="#2f8080" stroke="#2f8080" font-size="4.8" text-anchor="middle">D34</text>
<text x="575.33" y="273.11" fill="#2f8080" stroke="#2f8080" font-size="4.8" text-anchor="middle">1N4148</text>
<text x="575.63" y="282.98" fill="#2f8080" stroke="#2f8080" font-size="4.8" text-anchor="middle">MX35</text>
<text x="575.63" y="289.33" fill="#2f8080" stroke="#2f8080" font-size="4.8" text-anchor="middle">SW_Push</text>
<text x="575.33" y="311.03" fill="#2f8080" stroke="#2f8080" font-size="4.8" text-anchor="middle">D35</text>
<text x="575.33" y="317.23" fill="#2f8080" stroke="#2f8080" font-size="4.8" text-anchor="middle">1N4148</text>
<text x="575.63" y="327.1" fill="#2f8080" stroke="#2f8080" font-size="4.8" text-anchor="middle">MX36</text>
<text x="575.63" y="333.45" fill="#2f8080" stroke="#2f8080" font-size="4.8" text-anchor="middle">SW_Push</text>
<text x="575.33" y="355.15" fill="#2f8080" stroke="#2f8080" font-size="4.8" text-anchor="middle">D36</text>
<text x="575.33" y="361.35" fill="#2f8080" stroke="#2f8080" font-size="4.8" text-anchor="middle">1N4148</text>
<text x="592.44" y="96.64" fill="#2a2a2a" stroke="#2a2a2a" font-size="4.8" transform="rotate(-90 592.44 94.88)" stroke-width=".11">COL6</text>
<text x="607.14" y="106.5" fill="#2f8080" stroke="#2f8080" font-size="4.8" text-anchor="middle">MX37</text>
<text x="607.14" y="112.85" fill="#2f8080" stroke="#2f8080" font-size="4.8" text-anchor="middle">SW_Push</text>
<text x="606.84" y="134.55" fill="#2f8080" stroke="#2f8080" font-size="4.8" text-anchor="middle">D37</text>
<text x="606.84" y="140.75" fill="#2f8080" stroke="#2f8080" font-size="4.8" text-anchor="middle">1N4148</text>
<text x="607.14" y="150.62" fill="#2f8080" stroke="#2f8080" font-size="4.8" text-anchor="middle">MX38</text>
<text x="607.14" y="156.97" fill="#2f8080" stroke="#2f8080" font-size="4.8" text-anchor="middle">SW_Push</text>
<text x="606.84" y="178.67" fill="#2f8080" stroke="#2f8080" font-size="4.8" text-anchor="middle">D38</text>
<text x="606.84" y="184.87" fill="#2f8080" stroke="#2f8080" font-size="4.8" text-anchor="middle">1N4148</text>
<text x="607.14" y="194.74" fill="#2f8080" stroke="#2f8080" font-size="4.8" text-anchor="middle">MX39</text>
<text x="607.14" y="201.09" fill="#2f8080" stroke="#2f8080" font-size="4.8" text-anchor="middle">SW_Push</text>
<text x="606.84" y="222.79" fill="#2f8080" stroke="#2f8080" font-size="4.8" text-anchor="middle">D39</text>
<text x="606.84" y="228.99" fill="#2f8080" stroke="#2f8080" font-size="4.8" text-anchor="middle">1N4148</text>
<text x="607.14" y="238.86" fill="#2f8080" stroke="#2f8080" font-size="4.8" text-anchor="middle">MX40</text>
<text x="607.14" y="245.21" fill="#2f8080" stroke="#2f8080" font-size="4.8" text-anchor="middle">SW_Push</text>
<text x="606.84" y="266.91" fill="#2f8080" stroke="#2f8080" font-size="4.8" text-anchor="middle">D40</text>
<text x="606.84" y="273.11" fill="#2f8080" stroke="#2f8080" font-size="4.8" text-anchor="middle">1N4148</text>
<text x="607.14" y="282.98" fill="#2f8080" stroke="#2f8080" font-size="4.8" text-anchor="middle">MX41</text>
<text x="607.14" y="289.33" fill="#2f8080" stroke="#2f8080" font-size="4.8" text-anchor="middle">SW_Push</text>
<text x="606.84" y="311.03" fill="#2f8080" stroke="#2f8080" font-size="4.8" text-anchor="middle">D41</text>
<text x="606.84" y="317.23" fill="#2f8080" stroke="#2f8080" font-size="4.8" text-anchor="middle">1N4148</text>
<text x="607.14" y="327.1" fill="#2f8080" stroke="#2f8080" font-size="4.8" text-anchor="middle">MX42</text>
<text x="607.14" y="333.45" fill="#2f8080" stroke="#2f8080" font-size="4.8" text-anchor="middle">SW_Push</text>
<text x="606.84" y="355.15" fill="#2f8080" stroke="#2f8080" font-size="4.8" text-anchor="middle">D42</text>
<text x="606.84" y="361.35" fill="#2f8080" stroke="#2f8080" font-size="4.8" text-anchor="middle">1N4148</text>
<text x="623.95" y="96.64" fill="#2a2a2a" stroke="#2a2a2a" font-size="4.8" transform="rotate(-90 623.95 94.88)" stroke-width=".11">COL7</text>
<text x="638.66" y="106.5" fill="#2f8080" stroke="#2f8080" font-size="4.8" text-anchor="middle">MX43</text>
<text x="638.66" y="112.85" fill="#2f8080" stroke="#2f8080" font-size="4.8" text-anchor="middle">SW_Push</text>
<text x="638.36" y="134.55" fill="#2f8080" stroke="#2f8080" font-size="4.8" text-anchor="middle">D43</text>
<text x="638.36" y="140.75" fill="#2f8080" stroke="#2f8080" font-size="4.8" text-anchor="middle">1N4148</text>
<text x="638.66" y="150.62" fill="#2f8080" stroke="#2f8080" font-size="4.8" text-anchor="middle">MX44</text>
<text x="638.66" y="156.97" fill="#2f8080" stroke="#2f8080" font-size="4.8" text-anchor="middle">SW_Push</text>
<text x="638.36" y="178.67" fill="#2f8080" stroke="#2f8080" font-size="4.8" text-anchor="middle">D44</text>
<text x="638.36" y="184.87" fill="#2f8080" stroke="#2f8080" font-size="4.8" text-anchor="middle">1N4148</text>
<text x="638.66" y="194.74" fill="#2f8080" stroke="#2f8080" font-size="4.8" text-anchor="middle">MX45</text>
<text x="638.66" y="201.09" fill="#2f8080" stroke="#2f8080" font-size="4.8" text-anchor="middle">SW_Push</text>
<text x="638.36" y="222.79" fill="#2f8080" stroke="#2f8080" font-size="4.8" text-anchor="middle">D45</text>
<text x="638.36" y="228.99" fill="#2f8080" stroke="#2f8080" font-size="4.8" text-anchor="middle">1N4148</text>
<text x="638.66" y="238.86" fill="#2f8080" stroke="#2f8080" font-size="4.8" text-anchor="middle">MX46</text>
<text x="638.66" y="245.21" fill="#2f8080" stroke="#2f8080" font-size="4.8" text-anchor="middle">SW_Push</text>
<text x="638.36" y="266.91" fill="#2f8080" stroke="#2f8080" font-size="4.8" text-anchor="middle">D46</text>
<text x="638.36" y="273.11" fill="#2f8080" stroke="#2f8080" font-size="4.8" text-anchor="middle">1N4148</text>
<text x="638.66" y="282.98" fill="#2f8080" stroke="#2f8080" font-size="4.8" text-anchor="middle">MX47</text>
<text x="638.66" y="289.33" fill="#2f8080" stroke="#2f8080" font-size="4.8" text-anchor="middle">SW_Push</text>
<text x="638.36" y="311.03" fill="#2f8080" stroke="#2f8080" font-size="4.8" text-anchor="middle">D47</text>
<text x="638.36" y="317.23" fill="#2f8080" stroke="#2f8080" font-size="4.8" text-anchor="middle">1N4148</text>
<text x="638.66" y="327.1" fill="#2f8080" stroke="#2f8080" font-size="4.8" text-anchor="middle">MX48</text>
<text x="638.66" y="333.45" fill="#2f8080" stroke="#2f8080" font-size="4.8" text-anchor="middle">SW_Push</text>
<text x="638.36" y="355.15" fill="#2f8080" stroke="#2f8080" font-size="4.8" text-anchor="middle">D48</text>
<text x="638.36" y="361.35" fill="#2f8080" stroke="#2f8080" font-size="4.8" text-anchor="middle">1N4148</text>
<text x="655.47" y="96.64" fill="#2a2a2a" stroke="#2a2a2a" font-size="4.8" transform="rotate(-90 655.47 94.88)" stroke-width=".11">COL8</text>
<text x="670.17" y="106.5" fill="#2f8080" stroke="#2f8080" font-size="4.8" text-anchor="middle">MX49</text>
<text x="670.17" y="112.85" fill="#2f8080" stroke="#2f8080" font-size="4.8" text-anchor="middle">SW_Push</text>
<text x="669.87" y="134.55" fill="#2f8080" stroke="#2f8080" font-size="4.8" text-anchor="middle">D49</text>
<text x="669.87" y="140.75" fill="#2f8080" stroke="#2f8080" font-size="4.8" text-anchor="middle">1N4148</text>
<text x="670.17" y="150.62" fill="#2f8080" stroke="#2f8080" font-size="4.8" text-anchor="middle">MX50</text>
<text x="670.17" y="156.97" fill="#2f8080" stroke="#2f8080" font-size="4.8" text-anchor="middle">SW_Push</text>
<text x="669.87" y="178.67" fill="#2f8080" stroke="#2f8080" font-size="4.8" text-anchor="middle">D50</text>
<text x="669.87" y="184.87" fill="#2f8080" stroke="#2f8080" font-size="4.8" text-anchor="middle">1N4148</text>
<text x="670.17" y="194.74" fill="#2f8080" stroke="#2f8080" font-size="4.8" text-anchor="middle">MX51</text>
<text x="670.17" y="201.09" fill="#2f8080" stroke="#2f8080" font-size="4.8" text-anchor="middle">SW_Push</text>
<text x="669.87" y="222.79" fill="#2f8080" stroke="#2f8080" font-size="4.8" text-anchor="middle">D51</text>
<text x="669.87" y="228.99" fill="#2f8080" stroke="#2f8080" font-size="4.8" text-anchor="middle">1N4148</text>
<text x="670.17" y="238.86" fill="#2f8080" stroke="#2f8080" font-size="4.8" text-anchor="middle">MX52</text>
<text x="670.17" y="245.21" fill="#2f8080" stroke="#2f8080" font-size="4.8" text-anchor="middle">SW_Push</text>
<text x="669.87" y="266.91" fill="#2f8080" stroke="#2f8080" font-size="4.8" text-anchor="middle">D52</text>
<text x="669.87" y="273.11" fill="#2f8080" stroke="#2f8080" font-size="4.8" text-anchor="middle">1N4148</text>
<text x="670.17" y="282.98" fill="#2f8080" stroke="#2f8080" font-size="4.8" text-anchor="middle">MX53</text>
<text x="670.17" y="289.33" fill="#2f8080" stroke="#2f8080" font-size="4.8" text-anchor="middle">SW_Push</text>
<text x="669.87" y="311.03" fill="#2f8080" stroke="#2f8080" font-size="4.8" text-anchor="middle">D53</text>
<text x="669.87" y="317.23" fill="#2f8080" stroke="#2f8080" font-size="4.8" text-anchor="middle">1N4148</text>
<text x="670.17" y="327.1" fill="#2f8080" stroke="#2f8080" font-size="4.8" text-anchor="middle">MX54</text>
<text x="670.17" y="333.45" fill="#2f8080" stroke="#2f8080" font-size="4.8" text-anchor="middle">SW_Push</text>
<text x="669.87" y="355.15" fill="#2f8080" stroke="#2f8080" font-size="4.8" text-anchor="middle">D54</text>
<text x="669.87" y="361.35" fill="#2f8080" stroke="#2f8080" font-size="4.8" text-anchor="middle">1N4148</text>
<text x="686.98" y="96.64" fill="#2a2a2a" stroke="#2a2a2a" font-size="4.8" transform="rotate(-90 686.98 94.88)" stroke-width=".11">COL9</text>
<text x="701.69" y="106.5" fill="#2f8080" stroke="#2f8080" font-size="4.8" text-anchor="middle">MX55</text>
<text x="701.69" y="112.85" fill="#2f8080" stroke="#2f8080" font-size="4.8" text-anchor="middle">SW_Push</text>
<text x="701.39" y="134.55" fill="#2f8080" stroke="#2f8080" font-size="4.8" text-anchor="middle">D55</text>
<text x="701.39" y="140.75" fill="#2f8080" stroke="#2f8080" font-size="4.8" text-anchor="middle">1N4148</text>
<text x="701.69" y="150.62" fill="#2f8080" stroke="#2f8080" font-size="4.8" text-anchor="middle">MX56</text>
<text x="701.69" y="156.97" fill="#2f8080" stroke="#2f8080" font-size="4.8" text-anchor="middle">SW_Push</text>
<text x="701.39" y="178.67" fill="#2f8080" stroke="#2f8080" font-size="4.8" text-anchor="middle">D56</text>
<text x="701.39" y="184.87" fill="#2f8080" stroke="#2f8080" font-size="4.8" text-anchor="middle">1N4148</text>
<text x="701.69" y="194.74" fill="#2f8080" stroke="#2f8080" font-size="4.8" text-anchor="middle">MX57</text>
<text x="701.69" y="201.09" fill="#2f8080" stroke="#2f8080" font-size="4.8" text-anchor="middle">SW_Push</text>
<text x="701.39" y="222.79" fill="#2f8080" stroke="#2f8080" font-size="4.8" text-anchor="middle">D57</text>
<text x="701.39" y="228.99" fill="#2f8080" stroke="#2f8080" font-size="4.8" text-anchor="middle">1N4148</text>
<text x="701.69" y="238.86" fill="#2f8080" stroke="#2f8080" font-size="4.8" text-anchor="middle">MX58</text>
<text x="701.69" y="245.21" fill="#2f8080" stroke="#2f8080" font-size="4.8" text-anchor="middle">SW_Push</text>
<text x="701.39" y="266.91" fill="#2f8080" stroke="#2f8080" font-size="4.8" text-anchor="middle">D58</text>
<text x="701.39" y="273.11" fill="#2f8080" stroke="#2f8080" font-size="4.8" text-anchor="middle">1N4148</text>
<text x="701.69" y="282.98" fill="#2f8080" stroke="#2f8080" font-size="4.8" text-anchor="middle">MX59</text>
<text x="701.69" y="289.33" fill="#2f8080" stroke="#2f8080" font-size="4.8" text-anchor="middle">SW_Push</text>
<text x="701.39" y="311.03" fill="#2f8080" stroke="#2f8080" font-size="4.8" text-anchor="middle">D59</text>
<text x="701.39" y="317.23" fill="#2f8080" stroke="#2f8080" font-size="4.8" text-anchor="middle">1N4148</text>
<text x="701.69" y="327.1" fill="#2f8080" stroke="#2f8080" font-size="4.8" text-anchor="middle">MX60</text>
<text x="701.69" y="333.45" fill="#2f8080" stroke="#2f8080" font-size="4.8" text-anchor="middle">SW_Push</text>
<text x="701.39" y="355.15" fill="#2f8080" stroke="#2f8080" font-size="4.8" text-anchor="middle">D60</text>
<text x="701.39" y="361.35" fill="#2f8080" stroke="#2f8080" font-size="4.8" text-anchor="middle">1N4148</text>
<text x="388.8" y="142.16" fill="#2a2a2a" stroke="#2a2a2a" font-size="4.8" text-anchor="end" stroke-width=".11">ROW0</text>
<text x="388.8" y="186.28" fill="#2a2a2a" stroke="#2a2a2a" font-size="4.8" text-anchor="end" stroke-width=".11">ROW1</text>
<text x="388.8" y="230.4" fill="#2a2a2a" stroke="#2a2a2a" font-size="4.8" text-anchor="end" stroke-width=".11">ROW2</text>
<text x="388.8" y="274.52" fill="#2a2a2a" stroke="#2a2a2a" font-size="4.8" text-anchor="end" stroke-width=".11">ROW3</text>
<text x="388.8" y="318.64" fill="#2a2a2a" stroke="#2a2a2a" font-size="4.8" text-anchor="end" stroke-width=".11">ROW4</text>
<text x="388.8" y="362.76" fill="#2a2a2a" stroke="#2a2a2a" font-size="4.8" text-anchor="end" stroke-width=".11">ROW5</text>
<text x="544.11" y="372.28" fill="#2f8080" stroke="#2f8080" font-size="4.8" text-anchor="middle">2u_MX30</text>
<text x="544.11" y="377.58" fill="#2f8080" stroke="#2f8080" font-size="4.8" text-anchor="middle">SW_Push</text>
<text x="701.69" y="372.28" fill="#2f8080" stroke="#2f8080" font-size="4.8" text-anchor="middle">2u_MX60</text>
<text x="701.69" y="377.58" fill="#2f8080" stroke="#2f8080" font-size="4.8" text-anchor="middle">SW_Push</text>
<text x="530" y="520.05" fill="#2a2a2a" stroke="#2a2a2a" font-size="4.8" text-anchor="middle" stroke-width=".11">ROW0</text>
<text x="192.3" y="115.79" fill="#8e3016" stroke="#8e3016" font-size="4.8" text-anchor="end" stroke-width=".11">VBUS</text>
<text x="200.6" y="113.12" fill="#8e3016" stroke="#8e3016" font-size="4.6" text-anchor="middle" stroke-width=".11">A4</text>
<text x="192.3" y="128.4" fill="#8e3016" stroke="#8e3016" font-size="4.8" text-anchor="end" stroke-width=".11">CC1</text>
<text x="200.6" y="125.73" fill="#8e3016" stroke="#8e3016" font-size="4.6" text-anchor="middle" stroke-width=".11">A5</text>
<text x="192.3" y="134.7" fill="#8e3016" stroke="#8e3016" font-size="4.8" text-anchor="end" stroke-width=".11">CC2</text>
<text x="200.6" y="132.03" fill="#8e3016" stroke="#8e3016" font-size="4.6" text-anchor="middle" stroke-width=".11">B5</text>
<text x="192.3" y="147.31" fill="#8e3016" stroke="#8e3016" font-size="4.8" text-anchor="end" stroke-width=".11">D-</text>
<text x="200.6" y="144.64" fill="#8e3016" stroke="#8e3016" font-size="4.6" text-anchor="middle" stroke-width=".11">A7</text>
<text x="192.3" y="153.61" fill="#8e3016" stroke="#8e3016" font-size="4.8" text-anchor="end" stroke-width=".11">D-</text>
<text x="200.6" y="150.94" fill="#8e3016" stroke="#8e3016" font-size="4.6" text-anchor="middle" stroke-width=".11">B7</text>
<text x="192.3" y="159.92" fill="#8e3016" stroke="#8e3016" font-size="4.8" text-anchor="end" stroke-width=".11">D+</text>
<text x="200.6" y="157.24" fill="#8e3016" stroke="#8e3016" font-size="4.6" text-anchor="middle" stroke-width=".11">A6</text>
<text x="192.3" y="166.22" fill="#8e3016" stroke="#8e3016" font-size="4.8" text-anchor="end" stroke-width=".11">D+</text>
<text x="200.6" y="163.55" fill="#8e3016" stroke="#8e3016" font-size="4.6" text-anchor="middle" stroke-width=".11">B6</text>
<text x="192.3" y="185.13" fill="#8e3016" stroke="#8e3016" font-size="4.8" text-anchor="end" stroke-width=".11">SBU1</text>
<text x="200.6" y="182.45" fill="#8e3016" stroke="#8e3016" font-size="4.6" text-anchor="middle" stroke-width=".11">A8</text>
<text x="192.3" y="191.43" fill="#8e3016" stroke="#8e3016" font-size="4.8" text-anchor="end" stroke-width=".11">SBU2</text>
<text x="200.6" y="188.76" fill="#8e3016" stroke="#8e3016" font-size="4.6" text-anchor="middle" stroke-width=".11">B8</text>
<text x="150.18" y="195.53" fill="#8e3016" stroke="#8e3016" font-size="4.8" transform="rotate(-90 150.18 193.78)" stroke-width=".11">SHIELD</text>
<text x="169.08" y="195.53" fill="#8e3016" stroke="#8e3016" font-size="4.8" transform="rotate(-90 169.08 193.78)" stroke-width=".11">GND</text>
<text x="146.78" y="203.96" fill="#8e3016" stroke="#8e3016" font-size="4.6" text-anchor="middle" transform="rotate(-90 146.78 202.28)" stroke-width=".11">S1</text>
<text x="166.08" y="203.96" fill="#8e3016" stroke="#8e3016" font-size="4.6" text-anchor="middle" transform="rotate(-90 166.08 202.28)" stroke-width=".11">A1</text>
<text x="176" y="98.65" fill="#2f8080" stroke="#2f8080" font-size="4.8" text-anchor="middle">J1</text>
<text x="176" y="104.35" fill="#2f8080" stroke="#2f8080" font-size="4.8" text-anchor="middle">USB</text>
<text x="198.6" y="210.34" fill="#2f8080" stroke="#2f8080" font-size="4.8" text-anchor="middle" transform="rotate(-90 198.6 208.59)">GND</text>
<text x="178.84" y="219.66" fill="#2f8080" stroke="#2f8080" font-size="2.4" text-anchor="middle" stroke-width=".14">PWR_FLAG</text>
<text x="277.44" y="79.35" fill="#2f8080" stroke="#2f8080" font-size="4.8" text-anchor="middle">+5V</text>
<text x="268.54" y="93.7" fill="#2f8080" stroke="#2f8080" font-size="2.25" text-anchor="middle" transform="rotate(-90 268.54 92.88)" stroke-width=".14">PWR_FLAG</text>
<text x="281.04" y="99.95" fill="#2f8080" stroke="#2f8080" font-size="4.8">F1</text>
<text x="281.04" y="106.35" fill="#2f8080" stroke="#2f8080" font-size="4.8">100mA</text>
<text x="239.16" y="134.7" fill="#2f8080" stroke="#2f8080" font-size="4.8" text-anchor="middle" transform="rotate(-90 239.16 132.95)">GND</text>
<text x="211.6" y="121.75" fill="#2f8080" stroke="#2f8080" font-size="4.8" text-anchor="middle">R5</text>
<text x="222.4" y="121.75" fill="#2f8080" stroke="#2f8080" font-size="4.8" text-anchor="middle">5.1k</text>
<text x="211.6" y="140.75" fill="#2f8080" stroke="#2f8080" font-size="4.8" text-anchor="middle">R6</text>
<text x="222.4" y="140.75" fill="#2f8080" stroke="#2f8080" font-size="4.8" text-anchor="middle">5.1k</text>
<text x="330.3" y="140.65" fill="#2f8080" stroke="#2f8080" font-size="4.8" text-anchor="middle">75R</text>
<text x="342.5" y="140.65" fill="#2f8080" stroke="#2f8080" font-size="4.8" text-anchor="middle">R3</text>
<text x="330.3" y="158.05" fill="#2f8080" stroke="#2f8080" font-size="4.8" text-anchor="middle">75R</text>
<text x="342.5" y="158.05" fill="#2f8080" stroke="#2f8080" font-size="4.8" text-anchor="middle">R2</text>
<text x="356.3" y="145.35" fill="#2a2a2a" stroke="#2a2a2a" font-size="4.8" stroke-width=".11">USB_D-</text>
<text x="356.3" y="151.55" fill="#2a2a2a" stroke="#2a2a2a" font-size="4.8" stroke-width=".11">USB_D+</text>
<text x="312.1" y="79.35" fill="#2f8080" stroke="#2f8080" font-size="4.8" text-anchor="middle">+5V</text>
<text x="304" y="103.19" fill="#2f8080" stroke="#2f8080" font-size="4.8" text-anchor="middle" transform="rotate(-90 304 101.44)">R1</text>
<text x="318" y="103.19" fill="#2f8080" stroke="#2f8080" font-size="4.8" text-anchor="middle" transform="rotate(-90 318 101.44)">1.5k</text>
<text x="302.05" y="189.15" fill="#2f8080" stroke="#2f8080" font-size="4.8" text-anchor="middle">GND</text>
<text x="297.19" y="165.95" fill="#2f8080" stroke="#2f8080" font-size="4.8">D61</text>
<text x="297.19" y="172.05" fill="#2f8080" stroke="#2f8080" font-size="4.8">3.6V</text>
<text x="316.1" y="165.95" fill="#2f8080" stroke="#2f8080" font-size="4.8">D62</text>
<text x="316.1" y="172.05" fill="#2f8080" stroke="#2f8080" font-size="4.8">3.6V</text>
<text x="240.31" y="179.4" fill="#8e3016" stroke="#8e3016" font-size="4.6" text-anchor="middle" stroke-width=".11">4</text>
<text x="240.31" y="185.71" fill="#8e3016" stroke="#8e3016" font-size="4.6" text-anchor="middle" stroke-width=".11">3</text>
<text x="240.31" y="192.01" fill="#8e3016" stroke="#8e3016" font-size="4.6" text-anchor="middle" stroke-width=".11">2</text>
<text x="240.31" y="198.31" fill="#8e3016" stroke="#8e3016" font-size="4.6" text-anchor="middle" stroke-width=".11">1</text>
<text x="222.4" y="188.48" fill="#2f8080" stroke="#2f8080" font-size="4.8" text-anchor="middle">J3</text>
<text x="222.4" y="194.78" fill="#2f8080" stroke="#2f8080" font-size="4.8" text-anchor="middle">JST</text>
<text x="240.31" y="210.92" fill="#8e3016" stroke="#8e3016" font-size="4.6" text-anchor="middle" stroke-width=".11">4</text>
<text x="240.31" y="217.22" fill="#8e3016" stroke="#8e3016" font-size="4.6" text-anchor="middle" stroke-width=".11">3</text>
<text x="240.31" y="223.52" fill="#8e3016" stroke="#8e3016" font-size="4.6" text-anchor="middle" stroke-width=".11">2</text>
<text x="240.31" y="229.83" fill="#8e3016" stroke="#8e3016" font-size="4.6" text-anchor="middle" stroke-width=".11">1</text>
<text x="222.4" y="219.99" fill="#2f8080" stroke="#2f8080" font-size="4.8" text-anchor="middle">J4</text>
<text x="222.4" y="226.3" fill="#2f8080" stroke="#2f8080" font-size="4.8" text-anchor="middle">JST</text>
<text x="255.12" y="181.98" fill="#2f8080" stroke="#2f8080" font-size="4.8" text-anchor="middle" transform="rotate(-90 255.12 180.22)">GND</text>
<text x="255.12" y="232.4" fill="#2f8080" stroke="#2f8080" font-size="4.8" text-anchor="middle" transform="rotate(-90 255.12 230.65)">GND</text>
<text x="335.48" y="198.31" fill="#8e3016" stroke="#8e3016" font-size="4.6" text-anchor="middle" stroke-width=".11">1</text>
<text x="335.48" y="204.61" fill="#8e3016" stroke="#8e3016" font-size="4.6" text-anchor="middle" stroke-width=".11">2</text>
<text x="335.48" y="210.92" fill="#8e3016" stroke="#8e3016" font-size="4.6" text-anchor="middle" stroke-width=".11">3</text>
<text x="335.48" y="217.22" fill="#8e3016" stroke="#8e3016" font-size="4.6" text-anchor="middle" stroke-width=".11">4</text>
<text x="346.6" y="206.75" fill="#2f8080" stroke="#2f8080" font-size="4.8">Molex</text>
<text x="351.8" y="213.15" fill="#2f8080" stroke="#2f8080" font-size="4.8" text-anchor="middle">J5</text>
<text x="319.41" y="219.79" fill="#2f8080" stroke="#2f8080" font-size="4.8" text-anchor="middle" transform="rotate(-90 319.41 218.04)">GND</text>
<text x="222.66" y="377.95" fill="#2f8080" stroke="#2f8080" font-size="4.8" text-anchor="middle">U1</text>
<text x="222.66" y="383.55" fill="#2f8080" stroke="#2f8080" font-size="4.8" text-anchor="middle">ATMEGA328-PU</text>
<text x="252.78" y="304.88" fill="#8e3016" stroke="#8e3016" font-size="4.8" text-anchor="end" stroke-width=".11">PB0</text>
<text x="254.98" y="302.41" fill="#8e3016" stroke="#8e3016" font-size="4.6" stroke-width=".11">14</text>
<text x="270.9" y="302.88" fill="#2a2a2a" stroke="#2a2a2a" font-size="4.8" stroke-width=".11">COL0</text>
<text x="252.78" y="311.19" fill="#8e3016" stroke="#8e3016" font-size="4.8" text-anchor="end" stroke-width=".11">PB1</text>
<text x="254.98" y="308.71" fill="#8e3016" stroke="#8e3016" font-size="4.6" stroke-width=".11">15</text>
<text x="270.9" y="309.19" fill="#2a2a2a" stroke="#2a2a2a" font-size="4.8" stroke-width=".11">ROW5</text>
<text x="252.78" y="317.49" fill="#8e3016" stroke="#8e3016" font-size="4.8" text-anchor="end" stroke-width=".11">PB2</text>
<text x="254.98" y="315.02" fill="#8e3016" stroke="#8e3016" font-size="4.6" stroke-width=".11">16</text>
<text x="270.9" y="315.49" fill="#2a2a2a" stroke="#2a2a2a" font-size="4.8" stroke-width=".11">ROW4</text>
<text x="252.78" y="323.79" fill="#8e3016" stroke="#8e3016" font-size="4.8" text-anchor="end" stroke-width=".11">PB3</text>
<text x="254.98" y="321.32" fill="#8e3016" stroke="#8e3016" font-size="4.6" stroke-width=".11">17</text>
<text x="270.9" y="321.79" fill="#2a2a2a" stroke="#2a2a2a" font-size="4.8" stroke-width=".11">ROW3</text>
<text x="252.78" y="330.1" fill="#8e3016" stroke="#8e3016" font-size="4.8" text-anchor="end" stroke-width=".11">PB4</text>
<text x="254.98" y="327.62" fill="#8e3016" stroke="#8e3016" font-size="4.6" stroke-width=".11">18</text>
<text x="270.9" y="328.1" fill="#2a2a2a" stroke="#2a2a2a" font-size="4.8" stroke-width=".11">ROW2</text>
<text x="252.78" y="336.4" fill="#8e3016" stroke="#8e3016" font-size="4.8" text-anchor="end" stroke-width=".11">PB5</text>
<text x="254.98" y="333.93" fill="#8e3016" stroke="#8e3016" font-size="4.6" stroke-width=".11">19</text>
<text x="270.9" y="334.4" fill="#2a2a2a" stroke="#2a2a2a" font-size="4.8" stroke-width=".11">ROW1</text>
<text x="252.78" y="342.7" fill="#8e3016" stroke="#8e3016" font-size="4.8" text-anchor="end" stroke-width=".11">XTAL1/PB6</text>
<text x="254.98" y="340.23" fill="#8e3016" stroke="#8e3016" font-size="4.6" stroke-width=".11">9</text>
<text x="252.78" y="349.01" fill="#8e3016" stroke="#8e3016" font-size="4.8" text-anchor="end" stroke-width=".11">XTAL2/PB7</text>
<text x="254.98" y="346.53" fill="#8e3016" stroke="#8e3016" font-size="4.6" stroke-width=".11">10</text>
<text x="252.78" y="361.61" fill="#8e3016" stroke="#8e3016" font-size="4.8" text-anchor="end" stroke-width=".11">PC0</text>
<text x="254.98" y="359.14" fill="#8e3016" stroke="#8e3016" font-size="4.6" stroke-width=".11">23</text>
<text x="270.9" y="359.61" fill="#2a2a2a" stroke="#2a2a2a" font-size="4.8" stroke-width=".11">ROW0</text>
<text x="252.78" y="367.91" fill="#8e3016" stroke="#8e3016" font-size="4.8" text-anchor="end" stroke-width=".11">PC1</text>
<text x="254.98" y="365.44" fill="#8e3016" stroke="#8e3016" font-size="4.6" stroke-width=".11">24</text>
<text x="270.9" y="365.91" fill="#2a2a2a" stroke="#2a2a2a" font-size="4.8" stroke-width=".11">COL7</text>
<text x="252.78" y="374.22" fill="#8e3016" stroke="#8e3016" font-size="4.8" text-anchor="end" stroke-width=".11">PC2</text>
<text x="254.98" y="371.74" fill="#8e3016" stroke="#8e3016" font-size="4.6" stroke-width=".11">25</text>
<text x="270.9" y="372.22" fill="#2a2a2a" stroke="#2a2a2a" font-size="4.8" stroke-width=".11">COL8</text>
<text x="252.78" y="380.52" fill="#8e3016" stroke="#8e3016" font-size="4.8" text-anchor="end" stroke-width=".11">PC3</text>
<text x="254.98" y="378.05" fill="#8e3016" stroke="#8e3016" font-size="4.6" stroke-width=".11">26</text>
<text x="270.9" y="378.52" fill="#2a2a2a" stroke="#2a2a2a" font-size="4.8" stroke-width=".11">COL9</text>
<text x="252.78" y="386.82" fill="#8e3016" stroke="#8e3016" font-size="4.8" text-anchor="end" stroke-width=".11">PC4</text>
<text x="254.98" y="384.35" fill="#8e3016" stroke="#8e3016" font-size="4.6" stroke-width=".11">27</text>
<text x="270.9" y="384.82" fill="#2a2a2a" stroke="#2a2a2a" font-size="4.8" stroke-width=".11">LED2</text>
<text x="252.78" y="393.13" fill="#8e3016" stroke="#8e3016" font-size="4.8" text-anchor="end" stroke-width=".11">PC5</text>
<text x="254.98" y="390.65" fill="#8e3016" stroke="#8e3016" font-size="4.6" stroke-width=".11">28</text>
<text x="270.9" y="391.13" fill="#2a2a2a" stroke="#2a2a2a" font-size="4.8" stroke-width=".11">LED1</text>
<text x="252.78" y="399.43" fill="#8e3016" stroke="#8e3016" font-size="4.8" text-anchor="end" stroke-width=".11">RESET/PC6</text>
<text x="254.98" y="396.96" fill="#8e3016" stroke="#8e3016" font-size="4.6" stroke-width=".11">1</text>
<text x="270.9" y="397.43" fill="#2a2a2a" stroke="#2a2a2a" font-size="4.8" stroke-width=".11">RESET</text>
<text x="252.78" y="412.04" fill="#8e3016" stroke="#8e3016" font-size="4.8" text-anchor="end" stroke-width=".11">PD0</text>
<text x="254.98" y="409.56" fill="#8e3016" stroke="#8e3016" font-size="4.6" stroke-width=".11">2</text>
<text x="270.9" y="410.04" fill="#2a2a2a" stroke="#2a2a2a" font-size="4.8" stroke-width=".11">COL6</text>
<text x="252.78" y="418.34" fill="#8e3016" stroke="#8e3016" font-size="4.8" text-anchor="end" stroke-width=".11">PD1</text>
<text x="254.98" y="415.87" fill="#8e3016" stroke="#8e3016" font-size="4.6" stroke-width=".11">3</text>
<text x="270.9" y="416.34" fill="#2a2a2a" stroke="#2a2a2a" font-size="4.8" stroke-width=".11">COL5</text>
<text x="252.78" y="424.64" fill="#8e3016" stroke="#8e3016" font-size="4.8" text-anchor="end" stroke-width=".11">PD2</text>
<text x="254.98" y="422.17" fill="#8e3016" stroke="#8e3016" font-size="4.6" stroke-width=".11">4</text>
<text x="270.9" y="422.64" fill="#2a2a2a" stroke="#2a2a2a" font-size="4.8" stroke-width=".11">USB_D+</text>
<text x="252.78" y="430.94" fill="#8e3016" stroke="#8e3016" font-size="4.8" text-anchor="end" stroke-width=".11">PD3</text>
<text x="254.98" y="428.47" fill="#8e3016" stroke="#8e3016" font-size="4.6" stroke-width=".11">5</text>
<text x="270.9" y="428.94" fill="#2a2a2a" stroke="#2a2a2a" font-size="4.8" stroke-width=".11">USB_D-</text>
<text x="252.78" y="437.25" fill="#8e3016" stroke="#8e3016" font-size="4.8" text-anchor="end" stroke-width=".11">PD4</text>
<text x="254.98" y="434.77" fill="#8e3016" stroke="#8e3016" font-size="4.6" stroke-width=".11">6</text>
<text x="270.9" y="435.25" fill="#2a2a2a" stroke="#2a2a2a" font-size="4.8" stroke-width=".11">COL4</text>
<text x="252.78" y="443.55" fill="#8e3016" stroke="#8e3016" font-size="4.8" text-anchor="end" stroke-width=".11">PD5</text>
<text x="254.98" y="441.08" fill="#8e3016" stroke="#8e3016" font-size="4.6" stroke-width=".11">11</text>
<text x="270.9" y="441.55" fill="#2a2a2a" stroke="#2a2a2a" font-size="4.8" stroke-width=".11">COL3</text>
<text x="252.78" y="449.85" fill="#8e3016" stroke="#8e3016" font-size="4.8" text-anchor="end" stroke-width=".11">PD6</text>
<text x="254.98" y="447.38" fill="#8e3016" stroke="#8e3016" font-size="4.6" stroke-width=".11">12</text>
<text x="270.9" y="447.85" fill="#2a2a2a" stroke="#2a2a2a" font-size="4.8" stroke-width=".11">COL2</text>
<text x="252.78" y="456.16" fill="#8e3016" stroke="#8e3016" font-size="4.8" text-anchor="end" stroke-width=".11">PD7</text>
<text x="254.98" y="453.68" fill="#8e3016" stroke="#8e3016" font-size="4.6" stroke-width=".11">13</text>
<text x="270.9" y="454.16" fill="#2a2a2a" stroke="#2a2a2a" font-size="4.8" stroke-width=".11">COL1</text>
<text x="192.75" y="304.88" fill="#8e3016" stroke="#8e3016" font-size="4.8" stroke-width=".11">AREF</text>
<text x="185.84" y="302.41" fill="#8e3016" stroke="#8e3016" font-size="4.6" stroke-width=".11">21</text>
<text x="222.66" y="294.28" fill="#8e3016" stroke="#8e3016" font-size="4.8" text-anchor="end" transform="rotate(-90 222.66 292.53)" stroke-width=".11">VCC</text>
<text x="228.96" y="294.28" fill="#8e3016" stroke="#8e3016" font-size="4.8" text-anchor="end" transform="rotate(-90 228.96 292.53)" stroke-width=".11">AVCC</text>
<text x="219.66" y="288.83" fill="#8e3016" stroke="#8e3016" font-size="4" text-anchor="middle" transform="rotate(-90 219.66 287.37)" stroke-width=".11">7</text>
<text x="227.36" y="289.13" fill="#8e3016" stroke="#8e3016" font-size="4" text-anchor="middle" transform="rotate(-90 227.36 287.67)" stroke-width=".11">20</text>
<text x="223.86" y="262.35" fill="#2f8080" stroke="#2f8080" font-size="4.8" text-anchor="middle">+5V</text>
<text x="222.66" y="466.76" fill="#8e3016" stroke="#8e3016" font-size="4.8" transform="rotate(-90 222.66 465.01)" stroke-width=".11">GND</text>
<text x="219.86" y="471.62" fill="#8e3016" stroke="#8e3016" font-size="4" text-anchor="middle" transform="rotate(-90 219.86 470.16)" stroke-width=".11">8</text>
<text x="223.26" y="495.25" fill="#2f8080" stroke="#2f8080" font-size="4.8" text-anchor="middle">GND</text>
<text x="349.22" y="287.35" fill="#2f8080" stroke="#2f8080" font-size="4.8" text-anchor="middle">GND</text>
<text x="312.1" y="258.95" fill="#2f8080" stroke="#2f8080" font-size="4.8" text-anchor="middle">+5V</text>
<text x="308.2" y="274.24" fill="#8e3016" stroke="#8e3016" font-size="4.6" text-anchor="middle" transform="rotate(-90 308.2 272.56)" stroke-width=".11">5</text>
<text x="308.2" y="297.56" fill="#8e3016" stroke="#8e3016" font-size="4.6" text-anchor="middle" transform="rotate(-90 308.2 295.88)" stroke-width=".11">6</text>
<text x="314.51" y="274.24" fill="#8e3016" stroke="#8e3016" font-size="4.6" text-anchor="middle" transform="rotate(-90 314.51 272.56)" stroke-width=".11">3</text>
<text x="314.51" y="297.56" fill="#8e3016" stroke="#8e3016" font-size="4.6" text-anchor="middle" transform="rotate(-90 314.51 295.88)" stroke-width=".11">4</text>
<text x="320.81" y="274.24" fill="#8e3016" stroke="#8e3016" font-size="4.6" text-anchor="middle" transform="rotate(-90 320.81 272.56)" stroke-width=".11">1</text>
<text x="320.81" y="297.56" fill="#8e3016" stroke="#8e3016" font-size="4.6" text-anchor="middle" transform="rotate(-90 320.81 295.88)" stroke-width=".11">2</text>
<text x="331.2" y="285.65" fill="#2f8080" stroke="#2f8080" font-size="4.8" text-anchor="middle" transform="rotate(-90 331.2 283.9)">AVR_ISP_6</text>
<text x="337.6" y="286.25" fill="#2f8080" stroke="#2f8080" font-size="4.8" text-anchor="middle" transform="rotate(-90 337.6 284.5)">J2</text>
<text x="320.96" y="391.05" fill="#2f8080" stroke="#2f8080" font-size="4.8" text-anchor="middle">GND</text>
<text x="307.6" y="345.95" fill="#2f8080" stroke="#2f8080" font-size="4.8">Y1</text>
<text x="307.6" y="351.65" fill="#2f8080" stroke="#2f8080" font-size="4.8">16MHz</text>
<text x="307.8" y="364.75" fill="#2f8080" stroke="#2f8080" font-size="4.8">C1</text>
<text x="307.8" y="370.85" fill="#2f8080" stroke="#2f8080" font-size="4.8">22p</text>
<text x="326.4" y="364.75" fill="#2f8080" stroke="#2f8080" font-size="4.8">C2</text>
<text x="326.4" y="370.85" fill="#2f8080" stroke="#2f8080" font-size="4.8">22p</text>
<text x="321.66" y="420.05" fill="#2f8080" stroke="#2f8080" font-size="4.8" text-anchor="middle">+5V</text>
<text x="324.8" y="440.15" fill="#2f8080" stroke="#2f8080" font-size="4.8">R4</text>
<text x="324.8" y="446.25" fill="#2f8080" stroke="#2f8080" font-size="4.8">10k</text>
<text x="345.57" y="438.15" fill="#2f8080" stroke="#2f8080" font-size="4.8" text-anchor="middle">SW1</text>
<text x="345.57" y="443.75" fill="#2f8080" stroke="#2f8080" font-size="4.8" text-anchor="middle">RESET</text>
<text x="345.57" y="475.37" fill="#2f8080" stroke="#2f8080" font-size="4.8" text-anchor="middle">SW2</text>
<text x="345.57" y="481.07" fill="#2f8080" stroke="#2f8080" font-size="4.8" text-anchor="middle">BOOT</text>
<text x="364.98" y="510.95" fill="#2f8080" stroke="#2f8080" font-size="4.8" text-anchor="middle">GND</text>
<text x="395.6" y="394.28" fill="#2a2a2a" stroke="#2a2a2a" font-size="4.8" text-anchor="end" stroke-width=".11">LED1</text>
<text x="440.51" y="413.28" fill="#2f8080" stroke="#2f8080" font-size="4.8" text-anchor="middle">GND</text>
<text x="411.75" y="389.38" fill="#2f8080" stroke="#2f8080" font-size="4.8" text-anchor="middle">R7</text>
<text x="411.75" y="402.68" fill="#2f8080" stroke="#2f8080" font-size="4.8" text-anchor="middle">1.5k</text>
<text x="430.66" y="381.38" fill="#2f8080" stroke="#2f8080" font-size="4.8" text-anchor="middle">LED1</text>
<text x="430.66" y="387.08" fill="#2f8080" stroke="#2f8080" font-size="4.8" text-anchor="middle">RED</text>
<text x="395.6" y="435.25" fill="#2a2a2a" stroke="#2a2a2a" font-size="4.8" text-anchor="end" stroke-width=".11">LED2</text>
<text x="440.51" y="454.25" fill="#2f8080" stroke="#2f8080" font-size="4.8" text-anchor="middle">GND</text>
<text x="411.75" y="430.35" fill="#2f8080" stroke="#2f8080" font-size="4.8" text-anchor="middle">R8</text>
<text x="411.75" y="443.65" fill="#2f8080" stroke="#2f8080" font-size="4.8" text-anchor="middle">1.5k</text>
<text x="430.66" y="422.35" fill="#2f8080" stroke="#2f8080" font-size="4.8" text-anchor="middle">LED2</text>
<text x="430.66" y="428.05" fill="#2f8080" stroke="#2f8080" font-size="4.8" text-anchor="middle">GREEN</text>
<text x="390.99" y="464.15" fill="#2f8080" stroke="#2f8080" font-size="4.8" text-anchor="middle">+5V</text>
<text x="390.09" y="510.95" fill="#2f8080" stroke="#2f8080" font-size="4.8" text-anchor="middle">GND</text>
<text x="395.79" y="484.75" fill="#2f8080" stroke="#2f8080" font-size="4.8">C3</text>
<text x="395.79" y="490.45" fill="#2f8080" stroke="#2f8080" font-size="4.8">4.7u</text>
<text x="421" y="484.75" fill="#2f8080" stroke="#2f8080" font-size="4.8">C4</text>
<text x="421" y="490.45" fill="#2f8080" stroke="#2f8080" font-size="4.8">100n</text>
<text x="446.21" y="484.75" fill="#2f8080" stroke="#2f8080" font-size="4.8">C5</text>
<text x="446.21" y="490.45" fill="#2f8080" stroke="#2f8080" font-size="4.8">100n</text>
<text x="490.74" y="412.49" fill="#2f8080" stroke="#2f8080" font-size="4.8">H1</text>
<text x="490.74" y="417.89" fill="#2f8080" stroke="#2f8080" font-size="4.8">M2</text>
<text x="515.95" y="412.49" fill="#2f8080" stroke="#2f8080" font-size="4.8">H2</text>
<text x="515.95" y="417.89" fill="#2f8080" stroke="#2f8080" font-size="4.8">M2</text>
<text x="490.74" y="425.09" fill="#2f8080" stroke="#2f8080" font-size="4.8">H3</text>
<text x="490.74" y="430.49" fill="#2f8080" stroke="#2f8080" font-size="4.8">M2</text>
<text x="515.95" y="425.09" fill="#2f8080" stroke="#2f8080" font-size="4.8">H4</text>
<text x="515.95" y="430.49" fill="#2f8080" stroke="#2f8080" font-size="4.8">M2</text>
<text x="490.74" y="447.15" fill="#2f8080" stroke="#2f8080" font-size="4.8">H5</text>
<text x="490.74" y="452.55" fill="#2f8080" stroke="#2f8080" font-size="4.8">M2</text>
<text x="515.95" y="447.15" fill="#2f8080" stroke="#2f8080" font-size="4.8">H6</text>
<text x="515.95" y="452.55" fill="#2f8080" stroke="#2f8080" font-size="4.8">M2</text>
<text x="490.74" y="459.76" fill="#2f8080" stroke="#2f8080" font-size="4.8">H7</text>
<text x="490.74" y="465.16" fill="#2f8080" stroke="#2f8080" font-size="4.8">M2</text>
<text x="490.74" y="478.67" fill="#2f8080" stroke="#2f8080" font-size="4.8">H8</text>
<text x="490.74" y="484.07" fill="#2f8080" stroke="#2f8080" font-size="4.8">M2</text>
<text x="515.95" y="478.67" fill="#2f8080" stroke="#2f8080" font-size="4.8">H10</text>
<text x="515.95" y="484.07" fill="#2f8080" stroke="#2f8080" font-size="4.8">M2</text>
<text x="490.74" y="491.27" fill="#2f8080" stroke="#2f8080" font-size="4.8">H9</text>
<text x="490.74" y="496.67" fill="#2f8080" stroke="#2f8080" font-size="4.8">M2</text>
<text x="515.95" y="491.27" fill="#2f8080" stroke="#2f8080" font-size="4.8">H11</text>
<text x="515.95" y="496.67" fill="#2f8080" stroke="#2f8080" font-size="4.8">M2</text></g>
</svg>
<div class="bar">
<div class="tab on" style="left:329px">SCH</div><div class="tab" style="left:377px">PCB</div><div class="tab" style="left:425px">3D</div><div class="tab" style="left:473px">BOM</div>
<svg class="fs" width="14" height="14" viewBox="0 0 14 14" fill="none" stroke="#eee" stroke-width="1.1"><path d="M1.700 11.200L11.300 1.700M7.300 1.500H11.600V5.800M1.500 7V11.300H5.800"/></svg>
</div>
<svg class="logo" width="49" height="49" viewBox="0 0 48 48"><defs><filter id="sh" x="-30%" y="-30%" width="160%" height="170%"><feGaussianBlur stdDeviation="2.4"/></filter></defs>
<rect x="2" y="5" width="38" height="38" rx="9" fill="#000" opacity=".17" filter="url(#sh)"/>
<rect x="5" y="5" width="30" height="30" rx="5" fill="#c1c1c1"/>
<path d="M9 1.200H32A7.800 7.800 0 0 1 39.800 9V32A7.800 7.800 0 0 1 32 39.800H9A7.800 7.800 0 0 1 1.200 32V9A7.800 7.800 0 0 1 9 1.200ZM11.200 6.600A4.600 4.600 0 0 0 6.600 11.200V29.800A4.600 4.600 0 0 0 11.200 34.400H29.800A4.600 4.600 0 0 0 34.400 29.800V11.200A4.600 4.600 0 0 0 29.800 6.600Z" fill="#e61e2b" fill-rule="evenodd"/>
<circle cx="35.200" cy="35.600" r="6.300" fill="#c1c1c1"/><circle cx="35.500" cy="35.800" r="4.700" fill="#e61e2b"/>
<path d="M10.600 10.800H16.200V18.400H24.800V10.800H30.400V30.200H24.800V23H16.200V30.200H10.600Z" fill="#e61e2b"/></svg>
</div>
</body></html>
